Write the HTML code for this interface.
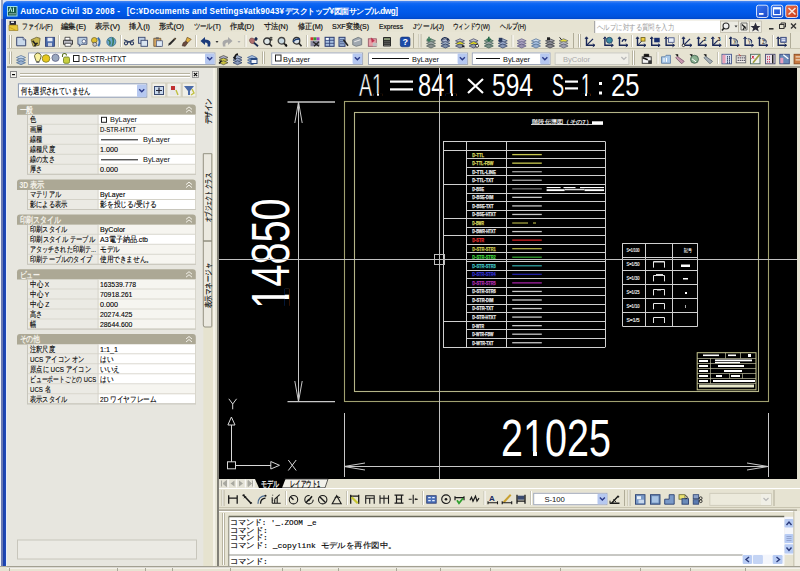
<!DOCTYPE html>
<html><head><meta charset="utf-8">
<style>
*{margin:0;padding:0;box-sizing:border-box}
html,body{width:800px;height:571px;overflow:hidden;background:#e6e3d2;font-family:"Liberation Sans",sans-serif;position:relative}
.a{position:absolute}
#title{left:2.6px;top:0.8px;width:797.4px;border-top-left-radius:5px;height:18.7px;background:linear-gradient(#4a88f0 0px,#1068f4 2.5px,#0460f0 5px,#0058e8 12px,#0052dc 16px,#0046c8 18px,#003cb0 19.5px)}
#lborder{left:0;top:19px;width:7px;height:552px;background:linear-gradient(90deg,#f0f4f8 0px,#f0f4f8 0.8px,#6a7ab4 1px,#6a7ab4 2.6px,#1a3ea8 3px,#1e48b8 5.5px,#3a68d0 6px,#e4ecfa 6.2px,#e4ecfa 7px)}
#menu{left:7px;top:19.5px;width:793px;height:12.2px;background:#e6e3d2}
#tb1{left:7px;top:31.7px;width:793px;height:16.8px;background:#e8e5d5}
#tb2{left:7px;top:48.3px;width:793px;height:17.5px;background:#e6e3d2;border-top:1px solid #c8c4b0}
#sep{left:7px;top:65.6px;width:793px;height:2.2px;background:#9c9a8c}
#panel{left:7px;top:67.8px;width:212px;height:499px;background:#e7e6df}
#draw{left:219px;top:68px;width:578px;height:411px;background:#000}
#rstrip{left:797px;top:68px;width:3px;height:420px;background:#e6e3d2}
#tabs{left:219px;top:479px;width:581px;height:9px;background:#e6e3d2}
#tb3{left:219px;top:488px;width:581px;height:20px;background:#e6e3d2}
#cmd{left:219px;top:508px;width:581px;height:58px;background:#e6e3d2}
#status{left:0;top:566px;width:800px;height:5px;background:#e6e3d2;border-top:1px solid #aca899}

</style></head><body>
<div class="a" style="left:0;top:0;width:800px;height:20px;background:linear-gradient(90deg,#f4f6f8 0,#f4f6f8 1px,#9aa4c0 1.3px,#9aa4c0 3px,#d8e0f0 3px)"></div>
<div id="title" class="a"></div>
<div id="lborder" class="a"></div>
<div id="menu" class="a"></div>
<div id="tb1" class="a"></div>
<div id="tb2" class="a"></div>
<div id="sep" class="a"></div>
<div id="panel" class="a"></div>
<div id="draw" class="a"></div>
<div id="rstrip" class="a"></div>
<div id="tabs" class="a"></div>
<div id="tb3" class="a"></div>
<div id="cmd" class="a"></div>
<div id="status" class="a"></div>

<svg class="a" style="left:0;top:0" width="800" height="571" viewBox="0 0 800 571" font-family="Liberation Sans, sans-serif">
<defs><clipPath id="dc"><rect x="219" y="68" width="578" height="411"/></clipPath></defs>
<text x="20.2" y="14.2" font-size="8.2" fill="#fff" textLength="99.8" lengthAdjust="spacing" font-weight="bold">AutoCAD Civil 3D 2008 -</text>
<text x="126.7" y="14.2" font-size="8.2" fill="#fff" textLength="157.3" lengthAdjust="spacing" font-weight="bold">[C:¥Documents and Settings¥atk9043¥</text>
<text x="284.5" y="14.2" font-size="8.2" fill="#fff" textLength="113.5" lengthAdjust="spacing" font-weight="bold">デスクトップ¥図面サンプル.dwg]</text>
<rect x="7.5" y="6.5" width="9.5" height="9.5" fill="#1a5a48" stroke="#a0e0e8" stroke-width="1"/>
<path d="M8.8 12 L10.5 7.5 L12 12 M13.5 7.5 V12" fill="none" stroke="#b8f0e0" stroke-width="1" />
<rect x="9" y="13" width="7" height="1.5" fill="#6a9a90" />
<defs><linearGradient id="wg756" x1="0" y1="0" x2="1" y2="1"><stop offset="0" stop-color="#3a78f0"/><stop offset="1" stop-color="#1a48c8"/></linearGradient></defs>
<rect x="756.5" y="5.2" width="11.5" height="12.3" rx="2" fill="url(#wg756)" stroke="#e8eefc" stroke-width="0.9"/>
<rect x="759" y="13" width="4.5" height="1.8" fill="#fff" />
<defs><linearGradient id="wg770" x1="0" y1="0" x2="1" y2="1"><stop offset="0" stop-color="#3a78f0"/><stop offset="1" stop-color="#1a48c8"/></linearGradient></defs>
<rect x="771.3" y="5.2" width="11.5" height="12.3" rx="2" fill="url(#wg770)" stroke="#e8eefc" stroke-width="0.9"/>
<rect x="773.5" y="7.8" width="7" height="6.8" fill="none" stroke="#fff" stroke-width="1.2"/>
<rect x="773.5" y="7.8" width="7" height="1.6" fill="#fff" />
<defs><linearGradient id="wg785" x1="0" y1="0" x2="1" y2="1"><stop offset="0" stop-color="#e8704a"/><stop offset="1" stop-color="#c83a1a"/></linearGradient></defs>
<rect x="785.7" y="5.2" width="12" height="12.3" rx="2" fill="url(#wg785)" stroke="#e8eefc" stroke-width="0.9"/>
<path d="M788.5 8 L795.5 14.5 M795.5 8 L788.5 14.5" fill="none" stroke="#f8e8e0" stroke-width="1.5" />
<path d="M9.5 21 H16 V25 H9.5 Z" fill="#2a2a3a" />
<rect x="11" y="21.5" width="3" height="1.5" fill="#e8e8f0" />
<path d="M9 25 L17.5 25 L18 30.5 L9 30.5 Z" fill="#e8c838" stroke="#8a7020" stroke-width="0.6" />
<path d="M9 27 L16 30.5" fill="none" stroke="#c8a020" stroke-width="1" />
<text x="22" y="28.8" font-size="8" fill="#111" textLength="30.6" lengthAdjust="spacingAndGlyphs" stroke="#111" stroke-width="0.2">ファイル(F)</text>
<text x="61" y="28.8" font-size="8" fill="#111" textLength="25" lengthAdjust="spacingAndGlyphs" stroke="#111" stroke-width="0.2">編集(E)</text>
<text x="95" y="28.8" font-size="8" fill="#111" textLength="25" lengthAdjust="spacingAndGlyphs" stroke="#111" stroke-width="0.2">表示(V)</text>
<text x="129" y="28.8" font-size="8" fill="#111" textLength="21" lengthAdjust="spacingAndGlyphs" stroke="#111" stroke-width="0.2">挿入(I)</text>
<text x="159" y="28.8" font-size="8" fill="#111" textLength="25" lengthAdjust="spacingAndGlyphs" stroke="#111" stroke-width="0.2">形式(O)</text>
<text x="193.5" y="28.8" font-size="8" fill="#111" textLength="27.5" lengthAdjust="spacingAndGlyphs" stroke="#111" stroke-width="0.2">ツール(T)</text>
<text x="230" y="28.8" font-size="8" fill="#111" textLength="24" lengthAdjust="spacingAndGlyphs" stroke="#111" stroke-width="0.2">作成(D)</text>
<text x="264" y="28.8" font-size="8" fill="#111" textLength="24" lengthAdjust="spacingAndGlyphs" stroke="#111" stroke-width="0.2">寸法(N)</text>
<text x="298" y="28.8" font-size="8" fill="#111" textLength="25" lengthAdjust="spacingAndGlyphs" stroke="#111" stroke-width="0.2">修正(M)</text>
<text x="332" y="28.8" font-size="8" fill="#111" textLength="37" lengthAdjust="spacingAndGlyphs" stroke="#111" stroke-width="0.2">SXF変換(S)</text>
<text x="379" y="28.8" font-size="8" fill="#111" textLength="24" lengthAdjust="spacingAndGlyphs" stroke="#111" stroke-width="0.2">Express</text>
<text x="413" y="28.8" font-size="8" fill="#111" textLength="31" lengthAdjust="spacingAndGlyphs" stroke="#111" stroke-width="0.2">Jツール(J)</text>
<text x="452.5" y="28.8" font-size="8" fill="#111" textLength="37.5" lengthAdjust="spacingAndGlyphs" stroke="#111" stroke-width="0.2">ウィンドウ(W)</text>
<text x="500" y="28.8" font-size="8" fill="#111" textLength="26" lengthAdjust="spacingAndGlyphs" stroke="#111" stroke-width="0.2">ヘルプ(H)</text>
<rect x="594.7" y="20.5" width="125.3" height="12.5" fill="#fff" />
<line x1="594.7" y1="21" x2="594.7" y2="33" stroke="#9a9a9a" stroke-width="1"/>
<text x="597" y="30" font-size="8" fill="#9a9a9a" textLength="77" lengthAdjust="spacingAndGlyphs" >ヘルプに対する質問を入力</text>
<rect x="720" y="20.5" width="42" height="12.5" fill="#ecebe2" />
<rect x="720.5" y="21" width="18" height="11.5" fill="none" stroke="#c0bcac" stroke-width="0.8"/>
<rect x="738.5" y="21" width="11" height="11.5" fill="none" stroke="#c0bcac" stroke-width="0.8"/>
<rect x="749.5" y="21" width="12" height="11.5" fill="none" stroke="#c0bcac" stroke-width="0.8"/>
<path d="M726 26 m-3 0 a3 3 0 1 0 6 0 a3 3 0 1 0 -6 0" fill="#f0f0f0" stroke="#333" stroke-width="1.1" />
<path d="M724 28 L722 30.5" fill="none" stroke="#222" stroke-width="1.6" />
<path d="M734.5 25.5 L737.5 25.5 L736 27.5 Z" fill="#333" />
<path d="M741 23 L747 23 L747 30 L741 30 Z" fill="none" stroke="#555" stroke-width="0.8" />
<path d="M742 24.5 L746 28.5 M743 30 L745 26" fill="none" stroke="#222" stroke-width="1.2" />
<path d="M755.5 22.5 L757 26 L760.5 26 L757.8 28.3 L758.8 31.5 L755.5 29.6 L752.2 31.5 L753.2 28.3 L750.5 26 L754 26 Z" fill="#2a2a3a" />
<rect x="769" y="28" width="4.5" height="1.6" fill="#333" />
<rect x="779.5" y="24.5" width="4.5" height="4" fill="none" stroke="#333" stroke-width="1"/>
<path d="M781 24.5 V23 H785.5 V27 H784" fill="none" stroke="#333" stroke-width="1" />
<path d="M791 23.5 L796 28.5 M796 23.5 L791 28.5" fill="none" stroke="#333" stroke-width="1.4" />
<line x1="9.5" y1="35" x2="9.5" y2="48" stroke="#b8b4a0" stroke-width="1"/>
<line x1="10.5" y1="35" x2="10.5" y2="48" stroke="#fff" stroke-width="1"/>
<line x1="11.5" y1="35" x2="11.5" y2="48" stroke="#b8b4a0" stroke-width="1"/>
<g transform="translate(16.2,36.8)"><path d="M0.5 0.5 H7 L9.5 3 V9 H0.5 Z" fill="#c8d8ea" stroke="#3a4870" stroke-width="1"/><path d="M7 0.5 V3 H9.5" fill="#fff" stroke="#3a4870" stroke-width="0.8"/></g>
<g transform="translate(30.6,36.8)"><path d="M0.5 3 L6 0.5 L9.5 1.5 L8.5 8.5 L2.5 9.5 Z" fill="#c8b850" stroke="#6a6030" stroke-width="0.8"/><path d="M2 4 L5 7.5 L7 6 M5 7.5 L4 9.5" stroke="#222" stroke-width="1.6" fill="none"/></g>
<g transform="translate(45,36.8)"><rect x="0.5" y="0.5" width="9" height="9" fill="#4a6aaa" stroke="#2a3a70" stroke-width="0.8"/><rect x="2.5" y="1" width="5" height="3.5" fill="#e8eef8"/><rect x="3" y="6" width="4" height="3.5" fill="#c8d0e0"/></g>
<g transform="translate(63,36.8)"><path d="M2 0.5 H7 V3.5 H2 Z" fill="#fff" stroke="#333" stroke-width="0.8"/><path d="M0.5 3.5 H9.5 V7.5 H0.5 Z" fill="#b8b8c0" stroke="#333" stroke-width="0.9"/><path d="M2 6.5 H8 V9.5 H2 Z" fill="#fff" stroke="#444" stroke-width="0.8"/></g>
<g transform="translate(77.4,36.8)"><path d="M0.5 0.5 H9.5 V7.5 H4 L2 9.5 L2 7.5 H0.5 Z" fill="#b8cce0" stroke="#3a4870" stroke-width="0.9"/><circle cx="6.5" cy="4.5" r="1.8" fill="#fff" stroke="#3a4870" stroke-width="0.7"/></g>
<g transform="translate(91.3,36.8)"><circle cx="3" cy="3.5" r="2.8" fill="#e0c030" stroke="#6a5a20" stroke-width="0.7"/><circle cx="3.5" cy="7.5" r="2" fill="#c8c8d0" stroke="#444" stroke-width="0.7"/><path d="M6.5 1 Q10 4.5 7 9.5" fill="none" stroke="#3a70b0" stroke-width="2"/></g>
<g transform="translate(106.3,36.8)"><circle cx="5" cy="5" r="4.5" fill="#6aa8d0" stroke="#3a6a8a" stroke-width="0.8"/><path d="M2 3 Q5 5 3 8 M6 1 Q8 4 6 9" stroke="#3a7a5a" stroke-width="1.6" fill="none"/></g>
<g transform="translate(124,36.8)"><circle cx="2" cy="6.5" r="1.6" fill="none" stroke="#2a3a60" stroke-width="1.1"/><circle cx="8" cy="6.5" r="1.6" fill="none" stroke="#2a3a60" stroke-width="1.1"/><path d="M0 3 L7 6 M10 3 L3 6" stroke="#2a3a60" stroke-width="1.1"/></g>
<g transform="translate(138,36.8)"><rect x="0.5" y="0.5" width="6.5" height="6" fill="#c0d0e4" stroke="#3a4870" stroke-width="0.9"/><rect x="3" y="3.5" width="6.5" height="6" fill="#d8e4f0" stroke="#3a4870" stroke-width="0.9"/></g>
<g transform="translate(152.8,36.8)"><path d="M1 1.5 H8 V9.5 H1 Z" fill="#d8a860" stroke="#6a5030" stroke-width="0.8"/><rect x="3" y="0.5" width="3" height="2" fill="#666"/><rect x="3.5" y="4" width="6" height="5.5" fill="#e0ecf8" stroke="#3a4870" stroke-width="0.7"/></g>
<g transform="translate(167,36.8)"><path d="M1 9 L2 6.5 L8 0.8 L9.3 2 L3.5 8 Z" fill="#2a2a2a"/><path d="M7 1.5 L8.5 3" stroke="#c8a060" stroke-width="0.8"/></g>
<g transform="translate(181.7,36.8)"><path d="M5.5 0.5 L9.5 2.5 L6 6 L4 4.5 Z" fill="#e0b040" stroke="#6a4a20" stroke-width="0.7"/><path d="M4 4.5 L6 6 L3.5 9.5 L0.5 9 L1.5 6 Z" fill="#6a4a40" stroke="#3a2a20" stroke-width="0.6"/></g>
<g transform="translate(249,36.8)"><path d="M0.5 4 Q0.5 0.5 4 1.5 L6 3 L4.5 7 Q1 7 0.5 4 Z" fill="#b07070" stroke="#704040" stroke-width="0.6"/><path d="M5 6 L9 9.5 M7 0.5 V4 M5.5 2 H8.5" stroke="#1a2a50" stroke-width="1.8"/></g>
<g transform="translate(263,36.8)"><circle cx="4" cy="4.5" r="3.3" fill="#e0e8e8" stroke="#333" stroke-width="1.3"/><path d="M6.5 7 L9 9.7" stroke="#222" stroke-width="1.6"/><path d="M8 0 V4 M6.5 1 H9.5 M6.5 3 H9.5" stroke="#222" stroke-width="0.9"/></g>
<g transform="translate(277.5,36.8)"><circle cx="4" cy="4" r="3.3" fill="#c8d8e0" stroke="#444" stroke-width="1.3"/><path d="M6.5 6.5 L9.5 9.5" stroke="#222" stroke-width="1.8"/><path d="M7 9.5 L9.5 9.5 L9.5 7 Z" fill="#111"/></g>
<g transform="translate(292,36.8)"><circle cx="4.5" cy="4" r="3.3" fill="#d8e0e8" stroke="#333" stroke-width="1.3"/><path d="M7 6.5 L9.5 9.5" stroke="#222" stroke-width="1.6"/><path d="M1 5 Q4 1.5 8 2.5" stroke="#1a3a70" stroke-width="1.4" fill="none"/></g>
<g transform="translate(310,36.8)"><rect x="0.5" y="0.5" width="3" height="3" fill="#d03030"/><rect x="3.5" y="0.5" width="3" height="3" fill="#30a030"/><rect x="6.5" y="0.5" width="3" height="3" fill="#a040c0"/><path d="M0.5 4 H9.5 V9.5 H0.5 Z" fill="#8a8aa0"/><path d="M3 5 L9 9.5 M9 5 L4 9.5" stroke="#222" stroke-width="1.2"/></g>
<g transform="translate(324.6,36.8)"><rect x="0.5" y="0.5" width="9" height="9" fill="#a8c0e0" stroke="#2a3a70" stroke-width="1"/><path d="M5 0.5 V9.5 M0.5 3.5 H9.5 M0.5 6.5 H9.5" stroke="#2a3a70" stroke-width="0.8"/><rect x="1.5" y="1.2" width="2.5" height="1.8" fill="#fff"/></g>
<g transform="translate(338.5,36.8)"><rect x="0.5" y="0.5" width="6" height="9" fill="#a8c0e0" stroke="#2a3a70" stroke-width="1"/><path d="M1.5 3 H5.5 M1.5 5 H5.5 M1.5 7 H5.5" stroke="#2a3a70" stroke-width="0.8"/><path d="M5 3 L9.5 9" stroke="#222" stroke-width="1.6"/></g>
<g transform="translate(352.2,36.8)"><path d="M0.5 3 L6 0.5 L9.5 2 L9.5 8 L4 9.5 L0.5 8 Z" fill="#a0a8b0" stroke="#606870" stroke-width="0.7"/><path d="M2 5 L8 3" stroke="#e8e8e8" stroke-width="1"/></g>
<g transform="translate(367.8,36.8)"><rect x="0.5" y="2" width="8" height="7.5" fill="#e8a0a8" stroke="#905060" stroke-width="0.8"/><path d="M3 0.5 L7 4 L4 6 Z" fill="#c03050"/><rect x="5" y="6" width="4.5" height="3.5" fill="#c0c0c0"/></g>
<g transform="translate(382,36.8)"><rect x="1" y="0.3" width="8" height="9.5" rx="0.8" fill="#2a2a28"/><rect x="2" y="1.3" width="6" height="2" fill="#8a9878"/><path d="M2.5 5 H7.5 M2.5 7 H7.5 M2.5 8.8 H7.5" stroke="#c8c8c8" stroke-width="0.8" stroke-dasharray="1 1"/></g>
<g transform="translate(400,36.8)"><rect x="0.3" y="0.3" width="9.7" height="9.7" rx="1.8" fill="#1c4aa8" stroke="#0c2a70" stroke-width="0.6"/><text x="2.4" y="8.6" font-size="9" font-weight="bold" fill="#fff" font-family="Liberation Sans">?</text></g>
<g transform="translate(426,36.8)"><path d="M0.5 4.0 L5 2.0 L9.5 4.0 L5 6.0 Z" fill="#90a898" stroke="#4a5a58" stroke-width="0.7"/><path d="M0.5 6.6 L5 4.6 L9.5 6.6 L5 8.6 Z" fill="#a0a8a8" stroke="#4a5a58" stroke-width="0.7"/><path d="M0.5 9.2 L5 7.2 L9.5 9.2 L5 11.2 Z" fill="#8a9090" stroke="#4a5a58" stroke-width="0.7"/><path d="M3 0 V3.5 M1 2 L3 4 L5 2" stroke="#3a7a5a" stroke-width="1.6" fill="none"/></g>
<g transform="translate(440.4,36.8)"><path d="M0.5 4.0 L5 2.0 L9.5 4.0 L5 6.0 Z" fill="#b8c0d8" stroke="#2a3a60" stroke-width="0.7"/><path d="M0.5 6.6 L5 4.6 L9.5 6.6 L5 8.6 Z" fill="#98a8c0" stroke="#2a3a60" stroke-width="0.7"/><path d="M0.5 9.2 L5 7.2 L9.5 9.2 L5 11.2 Z" fill="#8090a8" stroke="#2a3a60" stroke-width="0.7"/><path d="M1 3 Q4 -1 8 2.5 L6.5 3.5" stroke="#1a2a50" stroke-width="1.4" fill="none"/></g>
<g transform="translate(455,36.8)"><path d="M0.5 4.0 L5 2.0 L9.5 4.0 L5 6.0 Z" fill="#c0c0d0" stroke="#3a4060" stroke-width="0.7"/><path d="M0.5 6.6 L5 4.6 L9.5 6.6 L5 8.6 Z" fill="#e0d820" stroke="#3a4060" stroke-width="0.7"/><path d="M0.5 9.2 L5 7.2 L9.5 9.2 L5 11.2 Z" fill="#9098a8" stroke="#3a4060" stroke-width="0.7"/><path d="M7.5 8 L10 10.5 L7 10.5 Z" fill="#111"/></g>
<g transform="translate(468.6,36.8)"><path d="M0.5 4.0 L5 2.0 L9.5 4.0 L5 6.0 Z" fill="#c0c0d0" stroke="#3a4060" stroke-width="0.7"/><path d="M0.5 6.6 L5 4.6 L9.5 6.6 L5 8.6 Z" fill="#e0d820" stroke="#3a4060" stroke-width="0.7"/><path d="M0.5 9.2 L5 7.2 L9.5 9.2 L5 11.2 Z" fill="#9098a8" stroke="#3a4060" stroke-width="0.7"/><circle cx="8.5" cy="9" r="1.5" fill="#fff" stroke="#111" stroke-width="0.8"/></g>
<g transform="translate(483.8,36.8)"><path d="M0.5 4.0 L5 2.0 L9.5 4.0 L5 6.0 Z" fill="#90a898" stroke="#3a5a50" stroke-width="0.7"/><path d="M0.5 6.6 L5 4.6 L9.5 6.6 L5 8.6 Z" fill="#a0a8a8" stroke="#3a5a50" stroke-width="0.7"/><path d="M0.5 9.2 L5 7.2 L9.5 9.2 L5 11.2 Z" fill="#7a9088" stroke="#3a5a50" stroke-width="0.7"/><path d="M5 0 V3.5 M3 2 L5 4 L7 2" stroke="#2a6a4a" stroke-width="1.6" fill="none"/></g>
<g transform="translate(497.8,36.8)"><path d="M0.5 4.0 L5 2.0 L9.5 4.0 L5 6.0 Z" fill="#a8b8d0" stroke="#2a3a60" stroke-width="0.7"/><path d="M0.5 6.6 L5 4.6 L9.5 6.6 L5 8.6 Z" fill="#98a8c8" stroke="#2a3a60" stroke-width="0.7"/><path d="M0.5 9.2 L5 7.2 L9.5 9.2 L5 11.2 Z" fill="#8898b8" stroke="#2a3a60" stroke-width="0.7"/><rect x="1" y="1" width="3.5" height="4" fill="#2a3a60"/></g>
<g transform="translate(516.7,36.8)"><path d="M0.5 4.0 L5 2.0 L9.5 4.0 L5 6.0 Z" fill="#b8b0c8" stroke="#5a5880" stroke-width="0.7"/><path d="M0.5 6.6 L5 4.6 L9.5 6.6 L5 8.6 Z" fill="#a8a0c0" stroke="#5a5880" stroke-width="0.7"/><path d="M0.5 9.2 L5 7.2 L9.5 9.2 L5 11.2 Z" fill="#9890b0" stroke="#5a5880" stroke-width="0.7"/></g>
<g transform="translate(531,36.8)"><path d="M0.5 4.0 L5 2.0 L9.5 4.0 L5 6.0 Z" fill="#c8d8ec" stroke="#4a6a90" stroke-width="0.7"/><path d="M0.5 6.6 L5 4.6 L9.5 6.6 L5 8.6 Z" fill="#a8c0e0" stroke="#4a6a90" stroke-width="0.7"/><path d="M0.5 9.2 L5 7.2 L9.5 9.2 L5 11.2 Z" fill="#98b0d0" stroke="#4a6a90" stroke-width="0.7"/></g>
<g transform="translate(545,36.8)"><path d="M0.5 4.0 L5 2.0 L9.5 4.0 L5 6.0 Z" fill="#a8a8b0" stroke="#333840" stroke-width="0.7"/><path d="M0.5 6.6 L5 4.6 L9.5 6.6 L5 8.6 Z" fill="#909098" stroke="#333840" stroke-width="0.7"/><path d="M0.5 9.2 L5 7.2 L9.5 9.2 L5 11.2 Z" fill="#888890" stroke="#333840" stroke-width="0.7"/><rect x="2" y="0.5" width="3" height="3" fill="#222"/></g>
<g transform="translate(558.6,36.8)"><path d="M0.5 4.0 L5 2.0 L9.5 4.0 L5 6.0 Z" fill="#e8e040" stroke="#5a6070" stroke-width="0.7"/><path d="M0.5 6.6 L5 4.6 L9.5 6.6 L5 8.6 Z" fill="#b8b8c0" stroke="#5a6070" stroke-width="0.7"/><path d="M0.5 9.2 L5 7.2 L9.5 9.2 L5 11.2 Z" fill="#a0a0b0" stroke="#5a6070" stroke-width="0.7"/><path d="M1 0.5 L3 3" stroke="#222" stroke-width="1"/></g>
<g transform="translate(585,36.8)"><path d="M1.5 0.5 V8.5 H9.5" stroke="#1a2858" stroke-width="1.4" fill="none"/><path d="M0 2.2 L1.5 0 L3 2.2 M7.8 7 L10 8.5 L7.8 10" stroke="#1a2858" stroke-width="1" fill="none"/><path d="M2 8 L8 2" stroke="#1a2858" stroke-width="1.2"/></g>
<g transform="translate(603.4,36.8)"><path d="M1.5 0.5 V8.5 H9.5" stroke="#1a2858" stroke-width="1.4" fill="none"/><path d="M0 2.2 L1.5 0 L3 2.2 M7.8 7 L10 8.5 L7.8 10" stroke="#1a2858" stroke-width="1" fill="none"/><circle cx="6" cy="3.5" r="3" fill="#3a8aa0" stroke="#1a3a60" stroke-width="0.8"/></g>
<g transform="translate(618,36.8)"><path d="M1.5 0.5 V8.5 H9.5" stroke="#1a2858" stroke-width="1.4" fill="none"/><path d="M0 2.2 L1.5 0 L3 2.2 M7.8 7 L10 8.5 L7.8 10" stroke="#1a2858" stroke-width="1" fill="none"/><path d="M4 5 Q5 1.5 8 3 L7 4.5" stroke="#1a2858" stroke-width="1.3" fill="none"/></g>
<g transform="translate(636,36.8)"><path d="M1.5 0.5 V8.5 H9.5" stroke="#1a2858" stroke-width="1.4" fill="none"/><path d="M0 2.2 L1.5 0 L3 2.2 M7.8 7 L10 8.5 L7.8 10" stroke="#1a2858" stroke-width="1" fill="none"/><path d="M2 8 L6 4" stroke="#1a2858" stroke-width="1"/><rect x="5" y="0.8" width="4" height="3.5" fill="#f0d040" stroke="#6a5a10" stroke-width="0.8"/></g>
<g transform="translate(650.2,36.8)"><path d="M1.5 0.5 V8.5 H9.5" stroke="#1a2858" stroke-width="1.4" fill="none"/><path d="M0 2.2 L1.5 0 L3 2.2 M7.8 7 L10 8.5 L7.8 10" stroke="#1a2858" stroke-width="1" fill="none"/><rect x="4" y="1" width="5.5" height="4.5" fill="#1a3070"/></g>
<g transform="translate(664.6,36.8)"><path d="M1.5 0.5 V8.5 H9.5" stroke="#1a2858" stroke-width="1.4" fill="none"/><path d="M0 2.2 L1.5 0 L3 2.2 M7.8 7 L10 8.5 L7.8 10" stroke="#1a2858" stroke-width="1" fill="none"/><rect x="4" y="1" width="5.5" height="4.5" fill="#e8eef8" stroke="#3a4a80" stroke-width="0.8"/></g>
<g transform="translate(682,36.8)"><path d="M1.5 0.5 V8.5 H9.5" stroke="#1a2858" stroke-width="1.4" fill="none"/><path d="M0 2.2 L1.5 0 L3 2.2 M7.8 7 L10 8.5 L7.8 10" stroke="#1a2858" stroke-width="1" fill="none"/><path d="M2 8 L8 2" stroke="#1a2858" stroke-width="1.2"/><circle cx="1.5" cy="8.5" r="1.3" fill="#fff" stroke="#111" stroke-width="0.8"/></g>
<g transform="translate(697,36.8)"><path d="M1.5 0.5 V8.5 H9.5" stroke="#1a2858" stroke-width="1.4" fill="none"/><path d="M0 2.2 L1.5 0 L3 2.2 M7.8 7 L10 8.5 L7.8 10" stroke="#1a2858" stroke-width="1" fill="none"/><path d="M2 8 L6.5 3.5" stroke="#1a2858" stroke-width="1.2"/><text x="6.5" y="4" font-size="5" font-weight="bold" fill="#111" font-family="Liberation Sans">2</text></g>
<g transform="translate(711.3,36.8)"><path d="M1.5 0.5 V8.5 H9.5" stroke="#1a2858" stroke-width="1.4" fill="none"/><path d="M0 2.2 L1.5 0 L3 2.2 M7.8 7 L10 8.5 L7.8 10" stroke="#1a2858" stroke-width="1" fill="none"/><path d="M2 8 L6.5 3.5" stroke="#1a2858" stroke-width="1.2"/><text x="6.5" y="4" font-size="5" font-weight="bold" fill="#111" font-family="Liberation Sans">3</text></g>
<g transform="translate(729.2,36.8)"><path d="M1.5 0.5 V8.5 H9.5" stroke="#1a2858" stroke-width="1.4" fill="none"/><path d="M0 2.2 L1.5 0 L3 2.2 M7.8 7 L10 8.5 L7.8 10" stroke="#1a2858" stroke-width="1" fill="none"/><path d="M4 2 Q9 2 8 6" stroke="#1a2858" stroke-width="1" fill="none"/><text x="4.3" y="7" font-size="4.5" fill="#111" font-family="Liberation Sans">X</text></g>
<g transform="translate(743.6,36.8)"><path d="M1.5 0.5 V8.5 H9.5" stroke="#1a2858" stroke-width="1.4" fill="none"/><path d="M0 2.2 L1.5 0 L3 2.2 M7.8 7 L10 8.5 L7.8 10" stroke="#1a2858" stroke-width="1" fill="none"/><path d="M4 2 Q9 2 8 6" stroke="#1a2858" stroke-width="1" fill="none"/><text x="4.3" y="7" font-size="4.5" fill="#111" font-family="Liberation Sans">Y</text></g>
<g transform="translate(758,36.8)"><path d="M1.5 0.5 V8.5 H9.5" stroke="#1a2858" stroke-width="1.4" fill="none"/><path d="M0 2.2 L1.5 0 L3 2.2 M7.8 7 L10 8.5 L7.8 10" stroke="#1a2858" stroke-width="1" fill="none"/><path d="M4 2 Q9 2 8 6" stroke="#1a2858" stroke-width="1" fill="none"/><text x="4.3" y="7" font-size="4.5" fill="#111" font-family="Liberation Sans">Z</text></g>
<g transform="translate(776.7,36.8)"><path d="M1.5 0.5 V8.5 H9.5" stroke="#1a2858" stroke-width="1.4" fill="none"/><path d="M0 2.2 L1.5 0 L3 2.2 M7.8 7 L10 8.5 L7.8 10" stroke="#1a2858" stroke-width="1" fill="none"/><rect x="4" y="0.5" width="5.5" height="5" fill="#8a9ac8" stroke="#2a3a70" stroke-width="0.8"/><path d="M5 2 H8.5 M5 3.8 H8.5" stroke="#fff" stroke-width="0.8"/></g>
<path d="M210 46.5 Q212.5 39.5 205 39.5 L205 37 L200.5 41 L205 45 L205 42.5 Q208.5 42.5 207.5 46.5 Z" fill="#1a3a7a" />
<path d="M215.5 41 L218.5 41 L217 43 Z" fill="#333" />
<path d="M223 46.5 Q220.5 39.5 228 39.5 L228 37 L232.5 41 L228 45 L228 42.5 Q224.5 42.5 225.5 46.5 Z" fill="#a8a8a8" />
<path d="M237.5 41 L240.5 41 L239 43 Z" fill="#aaa" />
<line x1="58.5" y1="35" x2="58.5" y2="47" stroke="#c5c2b2" stroke-width="1"/>
<line x1="59.5" y1="35" x2="59.5" y2="47" stroke="#fff" stroke-width="1"/>
<line x1="120.5" y1="35" x2="120.5" y2="47" stroke="#c5c2b2" stroke-width="1"/>
<line x1="121.5" y1="35" x2="121.5" y2="47" stroke="#fff" stroke-width="1"/>
<line x1="195.5" y1="35" x2="195.5" y2="47" stroke="#c5c2b2" stroke-width="1"/>
<line x1="196.5" y1="35" x2="196.5" y2="47" stroke="#fff" stroke-width="1"/>
<line x1="245.0" y1="35" x2="245.0" y2="47" stroke="#c5c2b2" stroke-width="1"/>
<line x1="246.0" y1="35" x2="246.0" y2="47" stroke="#fff" stroke-width="1"/>
<line x1="306.5" y1="35" x2="306.5" y2="47" stroke="#c5c2b2" stroke-width="1"/>
<line x1="307.5" y1="35" x2="307.5" y2="47" stroke="#fff" stroke-width="1"/>
<line x1="512.0" y1="35" x2="512.0" y2="47" stroke="#c5c2b2" stroke-width="1"/>
<line x1="513.0" y1="35" x2="513.0" y2="47" stroke="#fff" stroke-width="1"/>
<line x1="631.5" y1="35" x2="631.5" y2="47" stroke="#c5c2b2" stroke-width="1"/>
<line x1="632.5" y1="35" x2="632.5" y2="47" stroke="#fff" stroke-width="1"/>
<line x1="678.5" y1="35" x2="678.5" y2="47" stroke="#c5c2b2" stroke-width="1"/>
<line x1="679.5" y1="35" x2="679.5" y2="47" stroke="#fff" stroke-width="1"/>
<line x1="725.5" y1="35" x2="725.5" y2="47" stroke="#c5c2b2" stroke-width="1"/>
<line x1="726.5" y1="35" x2="726.5" y2="47" stroke="#fff" stroke-width="1"/>
<line x1="772.5" y1="35" x2="772.5" y2="47" stroke="#c5c2b2" stroke-width="1"/>
<line x1="773.5" y1="35" x2="773.5" y2="47" stroke="#fff" stroke-width="1"/>
<line x1="413.5" y1="33" x2="413.5" y2="48" stroke="#b0ac98" stroke-width="1"/>
<line x1="573.5" y1="33" x2="573.5" y2="48" stroke="#b0ac98" stroke-width="1"/>
<line x1="790.5" y1="33" x2="790.5" y2="48" stroke="#b0ac98" stroke-width="1"/>
<line x1="419.0" y1="34" x2="419.0" y2="47.5" stroke="#b8b4a0" stroke-width="1"/>
<line x1="420.0" y1="34" x2="420.0" y2="47.5" stroke="#fff" stroke-width="1"/>
<line x1="421.0" y1="34" x2="421.0" y2="47.5" stroke="#b8b4a0" stroke-width="1"/>
<line x1="578.5" y1="34" x2="578.5" y2="47.5" stroke="#b8b4a0" stroke-width="1"/>
<line x1="579.5" y1="34" x2="579.5" y2="47.5" stroke="#fff" stroke-width="1"/>
<line x1="580.5" y1="34" x2="580.5" y2="47.5" stroke="#b8b4a0" stroke-width="1"/>
<line x1="9.5" y1="51.5" x2="9.5" y2="64" stroke="#b8b4a0" stroke-width="1"/>
<line x1="10.5" y1="51.5" x2="10.5" y2="64" stroke="#fff" stroke-width="1"/>
<line x1="11.5" y1="51.5" x2="11.5" y2="64" stroke="#b8b4a0" stroke-width="1"/>
<g transform="translate(16,53.5)"><path d="M0.5 4.0 L5 2.0 L9.5 4.0 L5 6.0 Z" fill="#c8d8ec" stroke="#4a6a90" stroke-width="0.7"/><path d="M0.5 6.6 L5 4.6 L9.5 6.6 L5 8.6 Z" fill="#a8c0e0" stroke="#4a6a90" stroke-width="0.7"/><path d="M0.5 9.2 L5 7.2 L9.5 9.2 L5 11.2 Z" fill="#98b0d0" stroke="#4a6a90" stroke-width="0.7"/></g>
<rect x="28" y="52.4" width="187.5" height="12.6" fill="#fff" />
<rect x="28.5" y="52.9" width="186.5" height="11.6" fill="none" stroke="#a0a8b8" stroke-width="1"/>
<path d="M36.3 61.5 L35 58 A3.3 3.3 0 1 1 40.7 58 L39.3 61.5 Z" fill="#f8f0a0" stroke="#5a5a30" stroke-width="0.9" />
<rect x="36.3" y="61.5" width="3" height="1.5" fill="#777" />
<circle cx="46" cy="58.5" r="3.8" fill="#e8c820" stroke="#7a7a20" stroke-width="0.8"/>
<circle cx="55.5" cy="57.8" r="3.6" fill="#9aa8c0" stroke="#5a6080" stroke-width="0.8"/>
<path d="M62.5 57 V55.5 A2 2 0 0 1 66.5 55.5" fill="none" stroke="#5a7020" stroke-width="1.1" />
<rect x="63.5" y="57" width="6" height="6.3" rx="1.5" fill="#c8d040" stroke="#6a7a20" stroke-width="0.8"/>
<rect x="73.5" y="55.5" width="5.5" height="6" fill="#fff" stroke="#222" stroke-width="1"/>
<text x="82.3" y="62" font-size="8.4" fill="#111" textLength="44" lengthAdjust="spacingAndGlyphs" >D-STR-HTXT</text>
<rect x="205" y="53.5" width="9.5" height="10.5" fill="#b6c8f0" rx="1"/>
<path d="M207.25 57.25 L209.75 59.75 L212.25 57.25" fill="none" stroke="#2a3a8a" stroke-width="1.4" />
<g transform="translate(218.5,53.5)"><path d="M0.5 4.0 L5 2.0 L9.5 4.0 L5 6.0 Z" fill="#a8a8c0" stroke="#4a4a40" stroke-width="0.7"/><path d="M0.5 6.6 L5 4.6 L9.5 6.6 L5 8.6 Z" fill="#d8d040" stroke="#4a4a40" stroke-width="0.7"/><path d="M0.5 9.2 L5 7.2 L9.5 9.2 L5 11.2 Z" fill="#c8c040" stroke="#4a4a40" stroke-width="0.7"/><path d="M0.5 10 L3 7" stroke="#111" stroke-width="1.2"/></g>
<g transform="translate(232.5,53.5)"><path d="M0.5 4.0 L5 2.0 L9.5 4.0 L5 6.0 Z" fill="#a8b8d0" stroke="#2a3a60" stroke-width="0.7"/><path d="M0.5 6.6 L5 4.6 L9.5 6.6 L5 8.6 Z" fill="#98a8c8" stroke="#2a3a60" stroke-width="0.7"/><path d="M0.5 9.2 L5 7.2 L9.5 9.2 L5 11.2 Z" fill="#8898b8" stroke="#2a3a60" stroke-width="0.7"/><path d="M5.5 0.5 Q2 1 2.5 5 L1 4" stroke="#111" stroke-width="1.5" fill="none"/></g>
<g transform="translate(247,53.5)"><path d="M0.5 4.0 L5 2.0 L9.5 4.0 L5 6.0 Z" fill="#a8c0e0" stroke="#3a5a90" stroke-width="0.7"/><path d="M0.5 6.6 L5 4.6 L9.5 6.6 L5 8.6 Z" fill="#98b0d8" stroke="#3a5a90" stroke-width="0.7"/><path d="M0.5 9.2 L5 7.2 L9.5 9.2 L5 11.2 Z" fill="#88a0c8" stroke="#3a5a90" stroke-width="0.7"/><rect x="4" y="5" width="6" height="5" fill="#f0f4fc" stroke="#2a4a80" stroke-width="1"/><rect x="4" y="5" width="6" height="1.5" fill="#2a4a80"/></g>
<line x1="262.5" y1="51.5" x2="262.5" y2="64" stroke="#b8b4a0" stroke-width="1"/>
<line x1="263.5" y1="51.5" x2="263.5" y2="64" stroke="#fff" stroke-width="1"/>
<line x1="264.5" y1="51.5" x2="264.5" y2="64" stroke="#b8b4a0" stroke-width="1"/>
<rect x="271.2" y="52.4" width="91.90000000000003" height="12.6" fill="#fff" />
<rect x="271.7" y="52.9" width="90.90000000000003" height="11.6" fill="none" stroke="#a0a8b8" stroke-width="1"/>
<rect x="352.6" y="53.5" width="9.5" height="10.5" fill="#b6c8f0" rx="1"/>
<path d="M354.85 57.25 L357.35 59.75 L359.85 57.25" fill="none" stroke="#2a3a8a" stroke-width="1.4" />
<text x="283" y="62" font-size="8" fill="#111" textLength="27" lengthAdjust="spacingAndGlyphs" >ByLayer</text>
<rect x="275.5" y="55" width="5.5" height="6" fill="#fff" stroke="#222" stroke-width="1"/>
<rect x="368" y="52.4" width="100.10000000000002" height="12.6" fill="#fff" />
<rect x="368.5" y="52.9" width="99.10000000000002" height="11.6" fill="none" stroke="#a0a8b8" stroke-width="1"/>
<rect x="457.6" y="53.5" width="9.5" height="10.5" fill="#b6c8f0" rx="1"/>
<path d="M459.85 57.25 L462.35 59.75 L464.85 57.25" fill="none" stroke="#2a3a8a" stroke-width="1.4" />
<text x="412" y="62" font-size="8" fill="#111" textLength="27" lengthAdjust="spacingAndGlyphs" >ByLayer</text>
<line x1="372" y1="58.5" x2="409" y2="58.5" stroke="#111" stroke-width="1"/>
<rect x="471.8" y="52.4" width="78.80000000000001" height="12.6" fill="#fff" />
<rect x="472.3" y="52.9" width="77.80000000000001" height="11.6" fill="none" stroke="#a0a8b8" stroke-width="1"/>
<rect x="540.1" y="53.5" width="9.5" height="10.5" fill="#b6c8f0" rx="1"/>
<path d="M542.35 57.25 L544.85 59.75 L547.35 57.25" fill="none" stroke="#2a3a8a" stroke-width="1.4" />
<text x="503" y="62" font-size="8" fill="#111" textLength="27" lengthAdjust="spacingAndGlyphs" >ByLayer</text>
<line x1="476" y1="58.5" x2="500" y2="58.5" stroke="#111" stroke-width="1"/>
<rect x="554.6" y="52.4" width="74.79999999999995" height="12.6" fill="#f0efe8" />
<rect x="555.1" y="52.9" width="73.79999999999995" height="11.6" fill="none" stroke="#c8c8c0" stroke-width="1"/>
<path d="M621.4 57 L623.9 59.5 L626.4 57" fill="none" stroke="#b8b8b8" stroke-width="1.2" />
<text x="563" y="62" font-size="8" fill="#aaa" textLength="27" lengthAdjust="spacingAndGlyphs" >ByColor</text>
<line x1="632.5" y1="50.5" x2="632.5" y2="65" stroke="#b8b4a0" stroke-width="1"/>
<line x1="633.5" y1="50.5" x2="633.5" y2="65" stroke="#fff" stroke-width="1"/>
<line x1="634.5" y1="50.5" x2="634.5" y2="65" stroke="#b8b4a0" stroke-width="1"/>
<g transform="translate(641.7,53.8)"><rect x="0.5" y="3" width="9" height="6.5" fill="#f4f4f4" stroke="#333" stroke-width="0.9"/><path d="M2.5 3 V0.5 H7 V3" fill="#111" stroke="#111" stroke-width="0.9"/><path d="M1 4 L6 6" stroke="#111" stroke-width="1.5"/><rect x="6.5" y="6.5" width="3.5" height="3.5" fill="#333"/></g>
<g transform="translate(661,53.8)"><path d="M0.5 3 H4 L5 1.5 H9.5 V9.5 H0.5 Z" fill="#a8c8e8" stroke="#5a7aa0" stroke-width="0.8"/><path d="M3 4 V8 M5.5 4 V8" stroke="#fff" stroke-width="1"/></g>
<g transform="translate(674.7,53.8)"><path d="M0.5 0.5 L3.5 0.5 L3.5 3.5 Z" fill="#111"/><path d="M2.5 2.5 L9.5 7.5 L7 10 L1 4 Z" fill="#c898b0" stroke="#6a4a60" stroke-width="0.7"/></g>
<g transform="translate(689,53.8)"><path d="M0.5 0.5 L3.5 0.5 L3.5 3.5 Z" fill="#111"/><circle cx="5.5" cy="5.5" r="4" fill="#8ab090" stroke="#3a5a4a" stroke-width="0.8"/><path d="M3 5 L7 8" stroke="#fff" stroke-width="1"/></g>
<g transform="translate(703,53.8)"><path d="M0.5 0.5 L3.5 0.5 L3.5 3.5 Z" fill="#111"/><path d="M2.5 2.5 L9.5 7.5 L7 10 L1 4 Z" fill="#a8b0b8" stroke="#4a5a68" stroke-width="0.7"/></g>
<g transform="translate(721.5,53.8)"><rect x="0.5" y="0.5" width="9.5" height="9.5" fill="#d8e0f0" stroke="#4a5a90" stroke-width="0.9"/><rect x="1" y="1" width="3" height="8.5" fill="#e8a0b8"/><path d="M5.5 3 h1 M7.5 3 h1 M5.5 5 h1 M7.5 5 h1 M5.5 7 h1 M7.5 7 h1 M5.5 9 h1 M7.5 9 h1" stroke="#1a2a50" stroke-width="1.2"/></g>
<g transform="translate(735.7,53.8)"><rect x="0.5" y="2" width="9.5" height="7" fill="#f4f0ec" stroke="#6a6a70" stroke-width="0.9"/><path d="M2 4 h1 M4 4 h1 M6 4 h1 M8 4 h1 M2 6.5 h1 M4 6.5 h1 M6 6.5 h1 M8 6.5 h1" stroke="#1a1a30" stroke-width="1.3"/><path d="M3 0.5 L5 2" stroke="#c03030" stroke-width="1"/></g>
<g transform="translate(750,53.8)"><rect x="0.5" y="0.5" width="9.5" height="9.5" fill="#f0f0f0" stroke="#4a6a60" stroke-width="0.9"/><path d="M2 2 L4 5 M1.5 5 L4 2" stroke="#d03050" stroke-width="1"/><path d="M3 9 L9.5 1" stroke="#a0a040" stroke-width="1.8"/></g>
<g transform="translate(765,53.8)"><rect x="0.5" y="0.5" width="9.5" height="9.5" fill="#e8e0e8" stroke="#4a4a70" stroke-width="0.9"/><path d="M2 3 h1 M4 3 h1 M2 5.5 h1 M4 5.5 h1 M2 8 h1 M4 8 h1" stroke="#c03050" stroke-width="1.3"/><rect x="7" y="1" width="1.5" height="8.5" fill="#222"/></g>
<g transform="translate(779.3,53.8)"><rect x="0.5" y="0.5" width="9.5" height="9.5" fill="#6a8ab8" stroke="#3a4a80" stroke-width="0.9"/><rect x="1" y="4" width="3" height="5.5" fill="#e8a0c0"/><path d="M4 1 L9 5" stroke="#fff" stroke-width="1.3"/></g>
<g transform="translate(793.6,53.8)"><rect x="0.5" y="0.5" width="9.5" height="9.5" fill="#c87a40" stroke="#8a4a20" stroke-width="0.9"/><path d="M2 3 h5 M2 6 h5" stroke="#f0d8c0" stroke-width="1.2"/></g>
<line x1="657.0" y1="52" x2="657.0" y2="64" stroke="#c5c2b2" stroke-width="1"/>
<line x1="658.0" y1="52" x2="658.0" y2="64" stroke="#fff" stroke-width="1"/>
<line x1="717.5" y1="52" x2="717.5" y2="64" stroke="#c5c2b2" stroke-width="1"/>
<line x1="718.5" y1="52" x2="718.5" y2="64" stroke="#fff" stroke-width="1"/>
<rect x="10.5" y="71.5" width="6" height="6" fill="#f4f3ee" stroke="#888" stroke-width="1"/>
<rect x="12" y="74" width="3" height="1.2" fill="#000" />
<line x1="20" y1="73.5" x2="190" y2="73.5" stroke="#b8b4a0" stroke-width="1"/>
<line x1="20" y1="74.5" x2="190" y2="74.5" stroke="#fff" stroke-width="1"/>
<line x1="20" y1="76.5" x2="190" y2="76.5" stroke="#b8b4a0" stroke-width="1"/>
<line x1="20" y1="77.5" x2="190" y2="77.5" stroke="#fff" stroke-width="1"/>
<rect x="192.5" y="71.5" width="6" height="6" fill="#f4f3ee" stroke="#888" stroke-width="0.8"/>
<path d="M193.8 72.8 L197.2 76.2 M197.2 72.8 L193.8 76.2" fill="none" stroke="#000" stroke-width="1.1" />
<rect x="17.9" y="83.3" width="129.4" height="14.4" fill="#fff" />
<rect x="18.4" y="83.8" width="128.4" height="13.4" fill="none" stroke="#8a98b0" stroke-width="1"/>
<text x="20.6" y="93.8" font-size="9" fill="#000" textLength="70" lengthAdjust="spacingAndGlyphs" stroke="#000" stroke-width="0.15">何も選択されていません</text>
<rect x="137" y="84.5" width="9.5" height="12.5" fill="#b6c8f0" rx="1"/>
<path d="M139.25 89.25 L141.75 91.75 L144.25 89.25" fill="none" stroke="#2a3a8a" stroke-width="1.4" />
<rect x="151.9" y="83" width="14.0" height="14" fill="#f0efe8" stroke="#cfcbb8" stroke-width="1"/>
<rect x="166.9" y="83" width="14.299999999999983" height="14" fill="#f0efe8" stroke="#cfcbb8" stroke-width="1"/>
<rect x="182.2" y="83" width="13.800000000000011" height="14" fill="#f0efe8" stroke="#cfcbb8" stroke-width="1"/>
<rect x="154.5" y="86.5" width="9" height="8" fill="#c8d8ec" stroke="#3a4a70" stroke-width="1"/>
<path d="M159 87.5 V93.5 M156 90.5 H162" fill="none" stroke="#223" stroke-width="1.2" />
<rect x="170" y="86" width="7" height="9" fill="#e8e8e8" />
<rect x="171" y="86" width="4" height="4" fill="#c03030" />
<path d="M176 90 L178 95" fill="none" stroke="#c0c040" stroke-width="1.4" />
<path d="M184 86 L194 86 L190 91 L190 95 L188 95 L188 91 Z" fill="#4a6aa8" />
<path d="M192 89 L194 93 L191 95" fill="none" stroke="#c0c040" stroke-width="1.4" />
<path d="M17 114.80000000000001 L17 107.4 Q17 104.4 20 104.4 L192.8 104.4 Q195.8 104.4 195.8 107.4 L195.8 114.80000000000001 Z" fill="#aca895" />
<text x="19.5" y="112.7" font-size="8.5" fill="#f4f2ea" textLength="13.8" lengthAdjust="spacingAndGlyphs" font-weight="bold">一般</text>
<path d="M186 109.4 L189 106.9 L192 109.4 M186 112.4 L189 109.9 L192 112.4" fill="none" stroke="#f4f2ea" stroke-width="1" />
<rect x="27.5" y="114.80000000000001" width="70.6" height="10" fill="#ebeae4" />
<rect x="98.1" y="114.80000000000001" width="97.7" height="10" fill="#ffffff" />
<line x1="27.5" y1="124.30000000000001" x2="195.8" y2="124.30000000000001" stroke="#d4d2c8" stroke-width="1"/>
<text x="30" y="122.20000000000002" font-size="8" fill="#000" textLength="6.2" lengthAdjust="spacingAndGlyphs" stroke="#000" stroke-width="0.12">色</text>
<rect x="101.5" y="117.30000000000001" width="5" height="5" fill="#fff" stroke="#222" stroke-width="1"/>
<text x="110" y="122.20000000000002" font-size="8" fill="#111" textLength="27" lengthAdjust="spacingAndGlyphs" >ByLayer</text>
<rect x="27.5" y="124.80000000000001" width="70.6" height="10" fill="#ebeae4" />
<rect x="98.1" y="124.80000000000001" width="97.7" height="10" fill="#f6f5f0" />
<line x1="27.5" y1="134.3" x2="195.8" y2="134.3" stroke="#d4d2c8" stroke-width="1"/>
<text x="30" y="132.20000000000002" font-size="8" fill="#000" textLength="12.4" lengthAdjust="spacingAndGlyphs" stroke="#000" stroke-width="0.12">画層</text>
<text x="100" y="132.20000000000002" font-size="8" fill="#000" textLength="36.00000000000001" lengthAdjust="spacingAndGlyphs" stroke="#000" stroke-width="0.12">D-STR-HTXT</text>
<rect x="27.5" y="134.8" width="70.6" height="10" fill="#ebeae4" />
<rect x="98.1" y="134.8" width="97.7" height="10" fill="#ffffff" />
<line x1="27.5" y1="144.3" x2="195.8" y2="144.3" stroke="#d4d2c8" stroke-width="1"/>
<text x="30" y="142.20000000000002" font-size="8" fill="#000" textLength="12.4" lengthAdjust="spacingAndGlyphs" stroke="#000" stroke-width="0.12">線種</text>
<line x1="101" y1="139.8" x2="138" y2="139.8" stroke="#111" stroke-width="1"/>
<text x="143" y="142.20000000000002" font-size="8" fill="#111" textLength="27" lengthAdjust="spacingAndGlyphs" >ByLayer</text>
<rect x="27.5" y="144.8" width="70.6" height="10" fill="#ebeae4" />
<rect x="98.1" y="144.8" width="97.7" height="10" fill="#f6f5f0" />
<line x1="27.5" y1="154.3" x2="195.8" y2="154.3" stroke="#d4d2c8" stroke-width="1"/>
<text x="30" y="152.20000000000002" font-size="8" fill="#000" textLength="24.8" lengthAdjust="spacingAndGlyphs" stroke="#000" stroke-width="0.12">線種尺度</text>
<text x="100" y="152.20000000000002" font-size="8" fill="#000" textLength="18.0" lengthAdjust="spacingAndGlyphs" stroke="#000" stroke-width="0.12">1.000</text>
<rect x="27.5" y="154.8" width="70.6" height="10" fill="#ebeae4" />
<rect x="98.1" y="154.8" width="97.7" height="10" fill="#ffffff" />
<line x1="27.5" y1="164.3" x2="195.8" y2="164.3" stroke="#d4d2c8" stroke-width="1"/>
<text x="30" y="162.20000000000002" font-size="8" fill="#000" textLength="24.8" lengthAdjust="spacingAndGlyphs" stroke="#000" stroke-width="0.12">線の太さ</text>
<line x1="101" y1="159.8" x2="138" y2="159.8" stroke="#111" stroke-width="1"/>
<text x="143" y="162.20000000000002" font-size="8" fill="#111" textLength="27" lengthAdjust="spacingAndGlyphs" >ByLayer</text>
<rect x="27.5" y="164.8" width="70.6" height="10" fill="#ebeae4" />
<rect x="98.1" y="164.8" width="97.7" height="10" fill="#f6f5f0" />
<line x1="27.5" y1="174.3" x2="195.8" y2="174.3" stroke="#d4d2c8" stroke-width="1"/>
<text x="30" y="172.20000000000002" font-size="8" fill="#000" textLength="12.4" lengthAdjust="spacingAndGlyphs" stroke="#000" stroke-width="0.12">厚さ</text>
<text x="100" y="172.20000000000002" font-size="8" fill="#000" textLength="18.0" lengthAdjust="spacingAndGlyphs" stroke="#000" stroke-width="0.12">0.000</text>
<line x1="27.5" y1="114.80000000000001" x2="27.5" y2="174.8" stroke="#c8c6bc" stroke-width="1"/>
<line x1="98.1" y1="114.80000000000001" x2="98.1" y2="174.8" stroke="#d4d2c8" stroke-width="1"/>
<line x1="195.5" y1="114.80000000000001" x2="195.5" y2="174.8" stroke="#d8d6cc" stroke-width="1"/>
<line x1="27.5" y1="174.3" x2="195.8" y2="174.3" stroke="#c8c6bc" stroke-width="1"/>
<path d="M17 190.0 L17 182.6 Q17 179.6 20 179.6 L192.8 179.6 Q195.8 179.6 195.8 182.6 L195.8 190.0 Z" fill="#aca895" />
<text x="19.5" y="187.9" font-size="8.5" fill="#f4f2ea" textLength="25.200000000000003" lengthAdjust="spacingAndGlyphs" font-weight="bold">3D 表示</text>
<path d="M186 184.6 L189 182.1 L192 184.6 M186 187.6 L189 185.1 L192 187.6" fill="none" stroke="#f4f2ea" stroke-width="1" />
<rect x="27.5" y="190.0" width="70.6" height="10" fill="#ebeae4" />
<rect x="98.1" y="190.0" width="97.7" height="10" fill="#ffffff" />
<line x1="27.5" y1="199.5" x2="195.8" y2="199.5" stroke="#d4d2c8" stroke-width="1"/>
<text x="30" y="197.4" font-size="8" fill="#000" textLength="31.0" lengthAdjust="spacingAndGlyphs" stroke="#000" stroke-width="0.12">マテリアル</text>
<text x="100" y="197.4" font-size="8" fill="#000" textLength="25.200000000000003" lengthAdjust="spacingAndGlyphs" stroke="#000" stroke-width="0.12">ByLayer</text>
<rect x="27.5" y="200.0" width="70.6" height="10" fill="#ebeae4" />
<rect x="98.1" y="200.0" width="97.7" height="10" fill="#ffffff" />
<line x1="27.5" y1="209.5" x2="195.8" y2="209.5" stroke="#d4d2c8" stroke-width="1"/>
<text x="30" y="207.4" font-size="8" fill="#000" textLength="37.2" lengthAdjust="spacingAndGlyphs" stroke="#000" stroke-width="0.12">影による表示</text>
<text x="100" y="207.4" font-size="8" fill="#000" textLength="56.400000000000006" lengthAdjust="spacingAndGlyphs" stroke="#000" stroke-width="0.12">影を投じる/受ける</text>
<line x1="27.5" y1="190.0" x2="27.5" y2="210.0" stroke="#c8c6bc" stroke-width="1"/>
<line x1="98.1" y1="190.0" x2="98.1" y2="210.0" stroke="#d4d2c8" stroke-width="1"/>
<line x1="195.5" y1="190.0" x2="195.5" y2="210.0" stroke="#d8d6cc" stroke-width="1"/>
<line x1="27.5" y1="209.5" x2="195.8" y2="209.5" stroke="#c8c6bc" stroke-width="1"/>
<path d="M17 224.8 L17 217.4 Q17 214.4 20 214.4 L192.8 214.4 Q195.8 214.4 195.8 217.4 L195.8 224.8 Z" fill="#aca895" />
<text x="19.5" y="222.70000000000002" font-size="8.5" fill="#f4f2ea" textLength="41.4" lengthAdjust="spacingAndGlyphs" font-weight="bold">印刷スタイル</text>
<path d="M186 219.4 L189 216.9 L192 219.4 M186 222.4 L189 219.9 L192 222.4" fill="none" stroke="#f4f2ea" stroke-width="1" />
<rect x="27.5" y="224.8" width="70.6" height="10" fill="#ebeae4" />
<rect x="98.1" y="224.8" width="97.7" height="10" fill="#f6f5f0" />
<line x1="27.5" y1="234.3" x2="195.8" y2="234.3" stroke="#d4d2c8" stroke-width="1"/>
<text x="30" y="232.20000000000002" font-size="8" fill="#000" textLength="37.2" lengthAdjust="spacingAndGlyphs" stroke="#000" stroke-width="0.12">印刷スタイル</text>
<text x="100" y="232.20000000000002" font-size="8" fill="#000" textLength="25.200000000000003" lengthAdjust="spacingAndGlyphs" stroke="#000" stroke-width="0.12">ByColor</text>
<rect x="27.5" y="234.8" width="70.6" height="10" fill="#ebeae4" />
<rect x="98.1" y="234.8" width="97.7" height="10" fill="#ffffff" />
<line x1="27.5" y1="244.3" x2="195.8" y2="244.3" stroke="#d4d2c8" stroke-width="1"/>
<text x="30" y="242.20000000000002" font-size="8" fill="#000" textLength="65.00000000000001" lengthAdjust="spacingAndGlyphs" stroke="#000" stroke-width="0.12">印刷スタイル テーブル</text>
<text x="100" y="242.20000000000002" font-size="8" fill="#000" textLength="48.00000000000001" lengthAdjust="spacingAndGlyphs" stroke="#000" stroke-width="0.12">A3電子納品.ctb</text>
<rect x="27.5" y="244.8" width="70.6" height="10" fill="#ebeae4" />
<rect x="98.1" y="244.8" width="97.7" height="10" fill="#f6f5f0" />
<line x1="27.5" y1="254.3" x2="195.8" y2="254.3" stroke="#d4d2c8" stroke-width="1"/>
<text x="30" y="252.20000000000002" font-size="8" fill="#000" textLength="66" lengthAdjust="spacingAndGlyphs" stroke="#000" stroke-width="0.12">アタッチされた印刷テ...</text>
<text x="100" y="252.20000000000002" font-size="8" fill="#000" textLength="19.799999999999997" lengthAdjust="spacingAndGlyphs" stroke="#000" stroke-width="0.12">モデル</text>
<rect x="27.5" y="254.8" width="70.6" height="10" fill="#ebeae4" />
<rect x="98.1" y="254.8" width="97.7" height="10" fill="#f6f5f0" />
<line x1="27.5" y1="264.3" x2="195.8" y2="264.3" stroke="#d4d2c8" stroke-width="1"/>
<text x="30" y="262.2" font-size="8" fill="#000" textLength="62.000000000000014" lengthAdjust="spacingAndGlyphs" stroke="#000" stroke-width="0.12">印刷テーブルのタイプ</text>
<text x="100" y="262.2" font-size="8" fill="#000" textLength="52.800000000000004" lengthAdjust="spacingAndGlyphs" stroke="#000" stroke-width="0.12">使用できません。</text>
<line x1="27.5" y1="224.8" x2="27.5" y2="264.8" stroke="#c8c6bc" stroke-width="1"/>
<line x1="98.1" y1="224.8" x2="98.1" y2="264.8" stroke="#d4d2c8" stroke-width="1"/>
<line x1="195.5" y1="224.8" x2="195.5" y2="264.8" stroke="#d8d6cc" stroke-width="1"/>
<line x1="27.5" y1="264.3" x2="195.8" y2="264.3" stroke="#c8c6bc" stroke-width="1"/>
<path d="M17 279.59999999999997 L17 272.2 Q17 269.2 20 269.2 L192.8 269.2 Q195.8 269.2 195.8 272.2 L195.8 279.59999999999997 Z" fill="#aca895" />
<text x="19.5" y="277.5" font-size="8.5" fill="#f4f2ea" textLength="20.700000000000003" lengthAdjust="spacingAndGlyphs" font-weight="bold">ビュー</text>
<path d="M186 274.2 L189 271.7 L192 274.2 M186 277.2 L189 274.7 L192 277.2" fill="none" stroke="#f4f2ea" stroke-width="1" />
<rect x="27.5" y="279.59999999999997" width="70.6" height="10" fill="#ebeae4" />
<rect x="98.1" y="279.59999999999997" width="97.7" height="10" fill="#f6f5f0" />
<line x1="27.5" y1="289.09999999999997" x2="195.8" y2="289.09999999999997" stroke="#d4d2c8" stroke-width="1"/>
<text x="30" y="286.99999999999994" font-size="8" fill="#000" textLength="19.2" lengthAdjust="spacingAndGlyphs" stroke="#000" stroke-width="0.12">中心 X</text>
<text x="100" y="286.99999999999994" font-size="8" fill="#000" textLength="36.00000000000001" lengthAdjust="spacingAndGlyphs" stroke="#000" stroke-width="0.12">163539.778</text>
<rect x="27.5" y="289.59999999999997" width="70.6" height="10" fill="#ebeae4" />
<rect x="98.1" y="289.59999999999997" width="97.7" height="10" fill="#f6f5f0" />
<line x1="27.5" y1="299.09999999999997" x2="195.8" y2="299.09999999999997" stroke="#d4d2c8" stroke-width="1"/>
<text x="30" y="296.99999999999994" font-size="8" fill="#000" textLength="19.2" lengthAdjust="spacingAndGlyphs" stroke="#000" stroke-width="0.12">中心 Y</text>
<text x="100" y="296.99999999999994" font-size="8" fill="#000" textLength="32.400000000000006" lengthAdjust="spacingAndGlyphs" stroke="#000" stroke-width="0.12">70918.261</text>
<rect x="27.5" y="299.59999999999997" width="70.6" height="10" fill="#ebeae4" />
<rect x="98.1" y="299.59999999999997" width="97.7" height="10" fill="#f6f5f0" />
<line x1="27.5" y1="309.09999999999997" x2="195.8" y2="309.09999999999997" stroke="#d4d2c8" stroke-width="1"/>
<text x="30" y="306.99999999999994" font-size="8" fill="#000" textLength="19.2" lengthAdjust="spacingAndGlyphs" stroke="#000" stroke-width="0.12">中心 Z</text>
<text x="100" y="306.99999999999994" font-size="8" fill="#000" textLength="18.0" lengthAdjust="spacingAndGlyphs" stroke="#000" stroke-width="0.12">0.000</text>
<rect x="27.5" y="309.59999999999997" width="70.6" height="10" fill="#ebeae4" />
<rect x="98.1" y="309.59999999999997" width="97.7" height="10" fill="#f6f5f0" />
<line x1="27.5" y1="319.09999999999997" x2="195.8" y2="319.09999999999997" stroke="#d4d2c8" stroke-width="1"/>
<text x="30" y="316.99999999999994" font-size="8" fill="#000" textLength="12.4" lengthAdjust="spacingAndGlyphs" stroke="#000" stroke-width="0.12">高さ</text>
<text x="100" y="316.99999999999994" font-size="8" fill="#000" textLength="32.400000000000006" lengthAdjust="spacingAndGlyphs" stroke="#000" stroke-width="0.12">20274.425</text>
<rect x="27.5" y="319.59999999999997" width="70.6" height="10" fill="#ebeae4" />
<rect x="98.1" y="319.59999999999997" width="97.7" height="10" fill="#f6f5f0" />
<line x1="27.5" y1="329.09999999999997" x2="195.8" y2="329.09999999999997" stroke="#d4d2c8" stroke-width="1"/>
<text x="30" y="326.99999999999994" font-size="8" fill="#000" textLength="6.2" lengthAdjust="spacingAndGlyphs" stroke="#000" stroke-width="0.12">幅</text>
<text x="100" y="326.99999999999994" font-size="8" fill="#000" textLength="32.400000000000006" lengthAdjust="spacingAndGlyphs" stroke="#000" stroke-width="0.12">28644.600</text>
<line x1="27.5" y1="279.59999999999997" x2="27.5" y2="329.59999999999997" stroke="#c8c6bc" stroke-width="1"/>
<line x1="98.1" y1="279.59999999999997" x2="98.1" y2="329.59999999999997" stroke="#d4d2c8" stroke-width="1"/>
<line x1="195.5" y1="279.59999999999997" x2="195.5" y2="329.59999999999997" stroke="#d8d6cc" stroke-width="1"/>
<line x1="27.5" y1="329.09999999999997" x2="195.8" y2="329.09999999999997" stroke="#c8c6bc" stroke-width="1"/>
<path d="M17 344.4 L17 337 Q17 334 20 334 L192.8 334 Q195.8 334 195.8 337 L195.8 344.4 Z" fill="#aca895" />
<text x="19.5" y="342.3" font-size="8.5" fill="#f4f2ea" textLength="20.700000000000003" lengthAdjust="spacingAndGlyphs" font-weight="bold">その他</text>
<path d="M186 339 L189 336.5 L192 339 M186 342 L189 339.5 L192 342" fill="none" stroke="#f4f2ea" stroke-width="1" />
<rect x="27.5" y="344.4" width="70.6" height="10" fill="#ebeae4" />
<rect x="98.1" y="344.4" width="97.7" height="10" fill="#ffffff" />
<line x1="27.5" y1="353.9" x2="195.8" y2="353.9" stroke="#d4d2c8" stroke-width="1"/>
<text x="30" y="351.79999999999995" font-size="8" fill="#000" textLength="24.8" lengthAdjust="spacingAndGlyphs" stroke="#000" stroke-width="0.12">注釈尺度</text>
<text x="100" y="351.79999999999995" font-size="8" fill="#000" textLength="18.0" lengthAdjust="spacingAndGlyphs" stroke="#000" stroke-width="0.12">1:1_1</text>
<rect x="27.5" y="354.4" width="70.6" height="10" fill="#ebeae4" />
<rect x="98.1" y="354.4" width="97.7" height="10" fill="#ffffff" />
<line x1="27.5" y1="363.9" x2="195.8" y2="363.9" stroke="#d4d2c8" stroke-width="1"/>
<text x="30" y="361.79999999999995" font-size="8" fill="#000" textLength="54.60000000000001" lengthAdjust="spacingAndGlyphs" stroke="#000" stroke-width="0.12">UCS アイコン オン</text>
<text x="100" y="361.79999999999995" font-size="8" fill="#000" textLength="13.2" lengthAdjust="spacingAndGlyphs" stroke="#000" stroke-width="0.12">はい</text>
<rect x="27.5" y="364.4" width="70.6" height="10" fill="#ebeae4" />
<rect x="98.1" y="364.4" width="97.7" height="10" fill="#ffffff" />
<line x1="27.5" y1="373.9" x2="195.8" y2="373.9" stroke="#d4d2c8" stroke-width="1"/>
<text x="30" y="371.79999999999995" font-size="8" fill="#000" textLength="60.80000000000001" lengthAdjust="spacingAndGlyphs" stroke="#000" stroke-width="0.12">原点に UCS アイコン</text>
<text x="100" y="371.79999999999995" font-size="8" fill="#000" textLength="19.799999999999997" lengthAdjust="spacingAndGlyphs" stroke="#000" stroke-width="0.12">いいえ</text>
<rect x="27.5" y="374.4" width="70.6" height="10" fill="#ebeae4" />
<rect x="98.1" y="374.4" width="97.7" height="10" fill="#ffffff" />
<line x1="27.5" y1="383.9" x2="195.8" y2="383.9" stroke="#d4d2c8" stroke-width="1"/>
<text x="30" y="381.79999999999995" font-size="8" fill="#000" textLength="66" lengthAdjust="spacingAndGlyphs" stroke="#000" stroke-width="0.12">ビューポートごとの UCS</text>
<text x="100" y="381.79999999999995" font-size="8" fill="#000" textLength="13.2" lengthAdjust="spacingAndGlyphs" stroke="#000" stroke-width="0.12">はい</text>
<rect x="27.5" y="384.4" width="70.6" height="10" fill="#ebeae4" />
<rect x="98.1" y="384.4" width="97.7" height="10" fill="#f6f5f0" />
<line x1="27.5" y1="393.9" x2="195.8" y2="393.9" stroke="#d4d2c8" stroke-width="1"/>
<text x="30" y="391.79999999999995" font-size="8" fill="#000" textLength="20.599999999999998" lengthAdjust="spacingAndGlyphs" stroke="#000" stroke-width="0.12">UCS 名</text>
<rect x="27.5" y="394.4" width="70.6" height="10" fill="#ebeae4" />
<rect x="98.1" y="394.4" width="97.7" height="10" fill="#ffffff" />
<line x1="27.5" y1="403.9" x2="195.8" y2="403.9" stroke="#d4d2c8" stroke-width="1"/>
<text x="30" y="401.79999999999995" font-size="8" fill="#000" textLength="37.2" lengthAdjust="spacingAndGlyphs" stroke="#000" stroke-width="0.12">表示スタイル</text>
<text x="100" y="401.79999999999995" font-size="8" fill="#000" textLength="56.400000000000006" lengthAdjust="spacingAndGlyphs" stroke="#000" stroke-width="0.12">2D ワイヤフレーム</text>
<line x1="27.5" y1="344.4" x2="27.5" y2="404.4" stroke="#c8c6bc" stroke-width="1"/>
<line x1="98.1" y1="344.4" x2="98.1" y2="404.4" stroke="#d4d2c8" stroke-width="1"/>
<line x1="195.5" y1="344.4" x2="195.5" y2="404.4" stroke="#d8d6cc" stroke-width="1"/>
<line x1="27.5" y1="403.9" x2="195.8" y2="403.9" stroke="#c8c6bc" stroke-width="1"/>
<rect x="17.5" y="540" width="179" height="19" fill="#ebeae4" stroke="#c8c6bc" stroke-width="1"/>
<rect x="203.3" y="68" width="9.7" height="498" fill="#e6e3cf" />
<rect x="199.5" y="68" width="13.5" height="86" fill="#e7e6df" />
<path d="M203.3 153.7 L211.8 153.7 L211.8 241 L203.3 241 Z M203.3 241 L211.8 241 L211.8 326.5 Q211.8 327 210 327 L205 327 Q203.3 327 203.3 325 Z" fill="#ebe9e0" stroke="#8a8878" stroke-width="0.9"/>
<text x="-124.3" y="211.3" font-size="8" fill="#111" textLength="26" lengthAdjust="spacingAndGlyphs" transform="rotate(-90)" font-weight="bold">デザイン</text>
<text x="-222" y="210.8" font-size="7.5" fill="#111" textLength="49" lengthAdjust="spacingAndGlyphs" transform="rotate(-90)" stroke="#111" stroke-width="0.2">オブジェクト クラス</text>
<text x="-308" y="210.8" font-size="7.5" fill="#111" textLength="45" lengthAdjust="spacingAndGlyphs" transform="rotate(-90)" stroke="#111" stroke-width="0.2">表示マネージャ</text>
<rect x="213" y="68" width="2.2" height="498" fill="#f4f2e8" />
<rect x="215.2" y="68" width="2" height="498" fill="#e8e6d6" />
<line x1="218" y1="68" x2="218" y2="566" stroke="#4a4a40" stroke-width="1.3"/>
<rect x="219" y="479" width="36" height="9" fill="#e4e2d6" />
<line x1="228.1" y1="479.5" x2="228.1" y2="487.5" stroke="#fff" stroke-width="1"/>
<line x1="236.7" y1="479.5" x2="236.7" y2="487.5" stroke="#fff" stroke-width="1"/>
<line x1="245.3" y1="479.5" x2="245.3" y2="487.5" stroke="#fff" stroke-width="1"/>
<line x1="253.9" y1="479.5" x2="253.9" y2="487.5" stroke="#fff" stroke-width="1"/>
<path d="M221.5 480.5 V486.5 M226.5 480.5 L223 483.5 L226.5 486.5 Z" fill="#a8a8a0" stroke="#a8a8a0" stroke-width="1" />
<path d="M234.5 480.5 L230.5 483.5 L234.5 486.5 Z" fill="#a8a8a0" />
<path d="M239 480.5 L243 483.5 L239 486.5 Z" fill="#a8a8a0" />
<path d="M248 480.5 L251.5 483.5 L248 486.5 Z M252.5 480.5 V486.5" fill="#a8a8a0" stroke="#a8a8a0" stroke-width="1" />
<path d="M284.5 479 L328 479 L325 487.8 L282 487.8" fill="#f2f1ea" stroke="#333" stroke-width="0.8" />
<path d="M255 479 L285.5 479 L282 488 L259 488 Z" fill="#000" />
<text x="260.7" y="487" font-size="9" fill="#fff" textLength="18" lengthAdjust="spacingAndGlyphs" stroke="#fff" stroke-width="0.25">モデル</text>
<text x="290" y="487" font-size="9" fill="#000" textLength="30" lengthAdjust="spacingAndGlyphs" stroke="#000" stroke-width="0.25">レイアウト1</text>
<line x1="219" y1="488.5" x2="800" y2="488.5" stroke="#fff" stroke-width="1"/>
<line x1="222.0" y1="490" x2="222.0" y2="506" stroke="#b8b4a0" stroke-width="1"/>
<line x1="223.0" y1="490" x2="223.0" y2="506" stroke="#fff" stroke-width="1"/>
<line x1="224.0" y1="490" x2="224.0" y2="506" stroke="#b8b4a0" stroke-width="1"/>
<g transform="translate(227.7,494.2)"><path d="M1 1 V9.5 M9.5 1 V9.5 M1 4 H9.5" stroke="#1a1a1a" stroke-width="1.3" fill="none"/></g>
<g transform="translate(242,494.2)"><path d="M0.5 1.5 L2.5 0.5 M8 9.5 L10 8.5 M1.5 1 L9 9" stroke="#1a1a1a" stroke-width="1.5" fill="none"/><path d="M2 4 L4 2" stroke="#1a1a1a" stroke-width="1"/></g>
<g transform="translate(257,494.2)"><path d="M1 9.5 Q1 2 8.5 1.5" stroke="#4a6a90" stroke-width="1.2" fill="none"/><path d="M3.5 9.5 Q3.5 4.5 8.5 4" stroke="#1a1a1a" stroke-width="1.3" fill="none"/><circle cx="8.5" cy="1.5" r="1" fill="#1a1a1a"/></g>
<g transform="translate(271.2,494.2)"><path d="M1 9 H9.5 M1 9 V3 M3.5 9 V5 M3.5 5 L8.5 0.5 M6 9 V3" stroke="#1a1a1a" stroke-width="1.1" fill="none"/><path d="M1 1 h2 M1 6 h2" stroke="#1a1a1a" stroke-width="0.8" stroke-dasharray="1 1"/></g>
<g transform="translate(288.5,494.2)"><circle cx="5" cy="5.5" r="4.2" fill="none" stroke="#1a1a1a" stroke-width="1.1"/><path d="M5 5.5 L2 2.5" stroke="#1a1a1a" stroke-width="1.4"/></g>
<g transform="translate(304,494.2)"><circle cx="5" cy="5.5" r="4.2" fill="none" stroke="#1a1a1a" stroke-width="1.1" stroke-dasharray="20 6"/><path d="M2 8.5 L5 5 L4.5 6.5 L8 2" stroke="#1a1a1a" stroke-width="1.6" fill="none"/></g>
<g transform="translate(317.7,494.2)"><circle cx="5" cy="5.5" r="4.2" fill="none" stroke="#1a1a1a" stroke-width="1.1"/><path d="M2 2.5 L8 8.5" stroke="#1a1a1a" stroke-width="1.4"/></g>
<g transform="translate(331.7,494.2)"><path d="M0.5 9.5 H9.5 L5 1.5 Z" fill="none" stroke="#1a1a1a" stroke-width="1.1"/><path d="M3 3.5 Q6 1.5 8.5 3.5" stroke="#1a1a1a" stroke-width="1" fill="none"/></g>
<g transform="translate(349.7,494.2)"><path d="M1 0.5 V9.5 M9 0.5 V9.5 M1 2 H9" stroke="#1a1a1a" stroke-width="1.3" fill="none"/><path d="M2 3 L8 9" stroke="#c8c830" stroke-width="2.2"/></g>
<g transform="translate(364.7,494.2)"><path d="M1 1 V9.5 M9.5 1 V9.5 M1 4 H9.5 M5 4 V9.5 M1 1.5 H9.5" stroke="#1a1a1a" stroke-width="1.1" fill="none"/></g>
<g transform="translate(379,494.2)"><path d="M1 1 V9.5 M5 1 V9.5 M9.5 1 V9.5 M1 4 H9.5" stroke="#1a1a1a" stroke-width="1.1" fill="none"/></g>
<g transform="translate(394,494.2)"><path d="M0.5 1 H9.5 M0.5 9 H9.5 M2.5 1 V9 M7.5 1 V9 M2.5 5 H7.5" stroke="#1a1a1a" stroke-width="1.2" fill="none"/></g>
<g transform="translate(408.2,494.2)"><path d="M5 0.5 V9.5 M0.5 5 H3.5 M6.5 5 H9.5" stroke="#1a1a1a" stroke-width="1.1" fill="none"/><path d="M7 4 L9.5 5 L7 6" fill="#1a1a1a"/></g>
<g transform="translate(426.2,494.2)"><rect x="0.5" y="1.5" width="9.5" height="7.5" fill="#4a70b8" stroke="#2a3a70" stroke-width="0.8"/><path d="M2 3.5 h2.5 M2 6.5 h2.5 M6 3.5 h2.5 M6 6.5 h2.5" stroke="#e8f0ff" stroke-width="1.2"/></g>
<g transform="translate(441,494.2)"><circle cx="5" cy="5" r="4.3" fill="none" stroke="#1a1a1a" stroke-width="1.1"/><circle cx="5" cy="5" r="1.3" fill="#1a1a1a"/></g>
<g transform="translate(454.5,494.2)"><path d="M0.5 2 V6 M9.5 2 V6 M0.5 3.5 H9.5" stroke="#1a1a1a" stroke-width="1.2" fill="none"/><path d="M2.5 6 L4.5 9 L8.5 4" stroke="#30a030" stroke-width="1.8" fill="none"/></g>
<g transform="translate(469.5,494.2)"><path d="M0.5 6 L2 3 L3.5 7 L6 2 L7.5 7 L9.5 4" stroke="#1a1a1a" stroke-width="1.2" fill="none"/></g>
<g transform="translate(487.5,494.2)"><text x="1.5" y="7" font-size="8" font-weight="bold" fill="#1a2a60" font-family="Liberation Sans">A</text><path d="M0.5 8.5 H10 M0.5 7 V10 M10 7 V10" stroke="#1a1a1a" stroke-width="1.1"/></g>
<g transform="translate(501.7,494.2)"><path d="M2 8 L9 0.5" stroke="#c8a030" stroke-width="2"/><path d="M0.5 8.5 H10 M0.5 7 V10 M10 7 V10" stroke="#1a1a1a" stroke-width="1.1"/></g>
<g transform="translate(516,494.2)"><rect x="1.5" y="1.5" width="7" height="4" fill="#3a4a70"/><path d="M1 0.5 V9.5 M9 0.5 V9.5 M1 7 H9" stroke="#1a1a1a" stroke-width="1.3"/></g>
<g transform="translate(609.5,494.2)"><path d="M0.5 9 H10 M2 9 L8.5 2 L9.5 3" stroke="#1a1a1a" stroke-width="1.4" fill="none"/><path d="M0.5 6.5 V9.5 M4 5 L6.5 8" stroke="#1a1a1a" stroke-width="1"/></g>
<g transform="translate(635,494.2)"><rect x="0.5" y="0.5" width="9.5" height="9.5" fill="#7a9ac8" stroke="#2a4070" stroke-width="0.9"/><rect x="2" y="2" width="4" height="3" fill="#e8f0f8"/><rect x="3.5" y="5.5" width="5.5" height="3.5" fill="#c8d8ec"/></g>
<g transform="translate(650,494.2)"><rect x="0.5" y="0.5" width="9.5" height="9.5" fill="#6a8ab8" stroke="#2a4070" stroke-width="0.9"/><rect x="2" y="2" width="6.5" height="6.5" fill="#a8c4e4"/></g>
<g transform="translate(664.2,494.2)"><path d="M0.5 10 V5 H5 V0.5 H10 V10 Z" fill="#7a9ac8" stroke="#2a4070" stroke-width="0.9"/></g>
<g transform="translate(678.5,494.2)"><rect x="0.5" y="0.5" width="6" height="4.5" fill="#e8e070" stroke="#6a6a30" stroke-width="0.8"/><rect x="3.5" y="4.5" width="6.5" height="5.5" fill="#6a8ab8" stroke="#2a4070" stroke-width="0.9"/><path d="M7 1 L9 3 L7 5" stroke="#111" stroke-width="0.9" fill="none"/></g>
<g transform="translate(692.7,494.2)"><rect x="0.5" y="0.5" width="5.5" height="4" fill="#8aa0c8" stroke="#2a4070" stroke-width="0.8"/><rect x="0.5" y="5.5" width="5.5" height="4.5" fill="#5a7ab0" stroke="#2a4070" stroke-width="0.8"/><circle cx="8" cy="4" r="1.4" fill="none" stroke="#111" stroke-width="0.8"/><circle cx="8" cy="7" r="1.4" fill="none" stroke="#111" stroke-width="0.8"/></g>
<line x1="285.5" y1="491" x2="285.5" y2="505" stroke="#c5c2b2" stroke-width="1"/>
<line x1="286.5" y1="491" x2="286.5" y2="505" stroke="#fff" stroke-width="1"/>
<line x1="346.5" y1="491" x2="346.5" y2="505" stroke="#c5c2b2" stroke-width="1"/>
<line x1="347.5" y1="491" x2="347.5" y2="505" stroke="#fff" stroke-width="1"/>
<line x1="422.5" y1="491" x2="422.5" y2="505" stroke="#c5c2b2" stroke-width="1"/>
<line x1="423.5" y1="491" x2="423.5" y2="505" stroke="#fff" stroke-width="1"/>
<line x1="484.0" y1="491" x2="484.0" y2="505" stroke="#c5c2b2" stroke-width="1"/>
<line x1="485.0" y1="491" x2="485.0" y2="505" stroke="#fff" stroke-width="1"/>
<line x1="530.5" y1="491" x2="530.5" y2="505" stroke="#c5c2b2" stroke-width="1"/>
<line x1="531.5" y1="491" x2="531.5" y2="505" stroke="#fff" stroke-width="1"/>
<rect x="533.2" y="492.8" width="74.3" height="12.4" fill="#fff" />
<rect x="533.7" y="493.3" width="73.3" height="11.4" fill="none" stroke="#a0a8b8" stroke-width="1"/>
<text x="544.4" y="502" font-size="8" fill="#111" textLength="20.5" lengthAdjust="spacingAndGlyphs" >S-100</text>
<rect x="597.5" y="493.8" width="9.7" height="10.5" fill="#b6c8f0" rx="1"/>
<path d="M599.85 497.55 L602.35 500.05 L604.85 497.55" fill="none" stroke="#2a3a8a" stroke-width="1.4" />
<line x1="624.5" y1="490" x2="624.5" y2="506" stroke="#b0ac98" stroke-width="1"/>
<line x1="628.0" y1="490" x2="628.0" y2="506" stroke="#b8b4a0" stroke-width="1"/>
<line x1="629.0" y1="490" x2="629.0" y2="506" stroke="#fff" stroke-width="1"/>
<line x1="630.0" y1="490" x2="630.0" y2="506" stroke="#b8b4a0" stroke-width="1"/>
<rect x="709.3" y="492.9" width="62.5" height="13" fill="#eceadc" />
<rect x="709.8" y="493.4" width="61.5" height="12" fill="none" stroke="#d0ccbc" stroke-width="1"/>
<rect x="761" y="494" width="10" height="11" fill="#f0efe6" />
<path d="M763.5 498 L766 500.5 L768.5 498" fill="none" stroke="#b8b8b8" stroke-width="1.2" />
<line x1="774" y1="490" x2="774" y2="506" stroke="#b0ac98" stroke-width="1"/>
<line x1="219" y1="507.5" x2="800" y2="507.5" stroke="#c8c4b0" stroke-width="1"/>
<line x1="219" y1="510.2" x2="797" y2="510.2" stroke="#9c9888" stroke-width="1.2"/>
<line x1="219" y1="511.5" x2="800" y2="511.5" stroke="#fff" stroke-width="1"/>
<line x1="222.5" y1="513" x2="222.5" y2="565" stroke="#b8b4a0" stroke-width="1"/>
<line x1="223.5" y1="513" x2="223.5" y2="565" stroke="#fff" stroke-width="1"/>
<line x1="224.5" y1="513" x2="224.5" y2="565" stroke="#b8b4a0" stroke-width="1"/>
<rect x="228.6" y="516.8" width="555.7" height="49" fill="#fff" />
<line x1="228.6" y1="516.5" x2="784.3" y2="516.5" stroke="#6a6a5a" stroke-width="1.3"/>
<line x1="228.8" y1="516.8" x2="228.8" y2="566" stroke="#808070" stroke-width="1"/>
<line x1="228.6" y1="555" x2="742.7" y2="555" stroke="#909088" stroke-width="1"/>
<text x="229.5" y="525" font-size="7.6" fill="#000" textLength="87.10000000000002" lengthAdjust="spacingAndGlyphs" font-family="Liberation Mono, monospace" stroke="#000" stroke-width="0.12">コマンド: &#39;_.ZOOM _e</text>
<text x="229.5" y="532.6" font-size="7.6" fill="#000" textLength="38.37" lengthAdjust="spacingAndGlyphs" font-family="Liberation Mono, monospace" stroke="#000" stroke-width="0.12">コマンド:</text>
<text x="229.5" y="540.2" font-size="7.6" fill="#000" textLength="38.37" lengthAdjust="spacingAndGlyphs" font-family="Liberation Mono, monospace" stroke="#000" stroke-width="0.12">コマンド:</text>
<text x="229.5" y="547.8" font-size="7.6" fill="#000" textLength="166.8400000000001" lengthAdjust="spacingAndGlyphs" font-family="Liberation Mono, monospace" stroke="#000" stroke-width="0.12">コマンド: _copylink モデルを再作図中。</text>
<text x="229.5" y="563.5" font-size="7.6" fill="#000" textLength="38.37" lengthAdjust="spacingAndGlyphs" font-family="Liberation Mono, monospace" stroke="#000" stroke-width="0.12">コマンド:</text>
<rect x="784.3" y="516.8" width="9.2" height="38" fill="#f4f6fc" />
<rect x="784.5" y="518.9" width="9" height="8.600000000000023" fill="#b8ccf4" rx="1.2"/>
<rect x="784.5" y="533.9" width="9" height="9.200000000000045" fill="#b8ccf4" rx="1.2"/>
<rect x="784.5" y="544.3" width="9" height="9.200000000000045" fill="#b8ccf4" rx="1.2"/>
<path d="M786.5 525 L789 522 L791.5 525" fill="none" stroke="#2a3a7a" stroke-width="1.4" />
<path d="M786.5 547.5 L789 550.5 L791.5 547.5" fill="none" stroke="#2a3a7a" stroke-width="1.4" />
<line x1="786.5" y1="536.5" x2="791.5" y2="536.5" stroke="#8a9ac8" stroke-width="0.8"/>
<line x1="786.5" y1="538.5" x2="791.5" y2="538.5" stroke="#8a9ac8" stroke-width="0.8"/>
<line x1="786.5" y1="540.5" x2="791.5" y2="540.5" stroke="#8a9ac8" stroke-width="0.8"/>
<rect x="742.7" y="554.7" width="41.6" height="9.3" fill="#f4f6fc" />
<rect x="742.7" y="555" width="9.3" height="9" fill="#b8ccf4" rx="1.2"/>
<rect x="753" y="555" width="9.9" height="9" fill="#c4d4f4" rx="1.2"/>
<rect x="772.7" y="555" width="9.8" height="9" fill="#b8ccf4" rx="1.2"/>
<path d="M749 557 L746 559.5 L749 562" fill="none" stroke="#2a3a7a" stroke-width="1.4" />
<path d="M776.5 557 L779.5 559.5 L776.5 562" fill="none" stroke="#2a3a7a" stroke-width="1.4" />
<line x1="794" y1="511" x2="794" y2="566" stroke="#b8b4a0" stroke-width="1"/>
<rect x="794.5" y="511" width="5.5" height="55" fill="#f0eee4" />
<rect x="7" y="566" width="793" height="5" fill="#e6e3d2" />
<line x1="7" y1="566.8" x2="800" y2="566.8" stroke="#8c8a7c" stroke-width="1.2"/>
<line x1="7" y1="568" x2="800" y2="568" stroke="#fff" stroke-width="1"/>
<line x1="9.5" y1="568" x2="9.5" y2="571" stroke="#a8a698" stroke-width="1"/>
<line x1="117.5" y1="568" x2="117.5" y2="571" stroke="#a8a698" stroke-width="1"/>
<line x1="145.5" y1="568" x2="145.5" y2="571" stroke="#a8a698" stroke-width="1"/>
<line x1="172.5" y1="568" x2="172.5" y2="571" stroke="#a8a698" stroke-width="1"/>
<line x1="230.5" y1="568" x2="230.5" y2="571" stroke="#a8a698" stroke-width="1"/>
<line x1="282.5" y1="568" x2="282.5" y2="571" stroke="#a8a698" stroke-width="1"/>
<line x1="300.5" y1="568" x2="300.5" y2="571" stroke="#a8a698" stroke-width="1"/>
<line x1="338.5" y1="568" x2="338.5" y2="571" stroke="#a8a698" stroke-width="1"/>
<line x1="396.5" y1="568" x2="396.5" y2="571" stroke="#a8a698" stroke-width="1"/>
<line x1="440.5" y1="568" x2="440.5" y2="571" stroke="#a8a698" stroke-width="1"/>
<line x1="490.5" y1="568" x2="490.5" y2="571" stroke="#a8a698" stroke-width="1"/>
<line x1="560.5" y1="568" x2="560.5" y2="571" stroke="#a8a698" stroke-width="1"/>
<line x1="640.5" y1="568" x2="640.5" y2="571" stroke="#a8a698" stroke-width="1"/>
<line x1="690.5" y1="568" x2="690.5" y2="571" stroke="#a8a698" stroke-width="1"/>
<line x1="745.5" y1="568" x2="745.5" y2="571" stroke="#a8a698" stroke-width="1"/>
<g clip-path="url(#dc)">
<rect x="344.5" y="101.5" width="424" height="300" fill="none" stroke="#a0a070" stroke-width="1.1"/>
<rect x="354.5" y="112.5" width="404" height="279" fill="none" stroke="#b4b488" stroke-width="1.1"/>
<text x="359" y="96" font-size="31" fill="#fff" textLength="24" lengthAdjust="spacingAndGlyphs" stroke="#000" stroke-width="0.5">A1</text>
<rect x="390" y="80.5" width="23" height="2.2" fill="#fff"/>
<rect x="390" y="88.3" width="23" height="2.2" fill="#fff"/>
<path d="M468 79 L483 93 M483 79 L468 93" stroke="#fff" stroke-width="2.2"/>
<text x="418" y="96" font-size="31" fill="#fff" textLength="39.5" lengthAdjust="spacingAndGlyphs" >841</text>
<text x="492" y="96" font-size="31" fill="#fff" textLength="41" lengthAdjust="spacingAndGlyphs" >594</text>
<text x="552" y="96" font-size="31" fill="#fff" textLength="12" lengthAdjust="spacingAndGlyphs" >S</text>
<rect x="565" y="80.5" width="13" height="2.2" fill="#fff"/>
<rect x="565" y="87.3" width="13" height="2.2" fill="#fff"/>
<text x="581" y="96" font-size="31" fill="#fff" textLength="10" lengthAdjust="spacingAndGlyphs" >1</text>
<rect x="599" y="82" width="3" height="3" fill="#fff"/>
<rect x="599" y="91.5" width="3" height="3" fill="#fff"/>
<text x="611" y="96" font-size="31" fill="#fff" textLength="28.5" lengthAdjust="spacingAndGlyphs" >25</text>
<rect x="373.5" y="93.2" width="3.5" height="4" fill="#000"/>
<rect x="379" y="93.2" width="3.5" height="4" fill="#000"/>
<rect x="445.5" y="93.2" width="5.5" height="4" fill="#000"/>
<rect x="453" y="93.2" width="3.5" height="4" fill="#000"/>
<rect x="581.5" y="93.2" width="3.5" height="4" fill="#000"/>
<rect x="587" y="93.2" width="3.5" height="4" fill="#000"/>
<line x1="287.5" y1="102" x2="335" y2="102" stroke="#c8c8c8" stroke-width="1.3"/>
<line x1="287.5" y1="401.6" x2="335" y2="401.6" stroke="#c8c8c8" stroke-width="1.3"/>
<line x1="298.5" y1="102" x2="298.5" y2="401.6" stroke="#c8c8c8" stroke-width="1"/>
<path d="M294.8 123 L298.5 102 L302.2 123 M294.8 381 L298.5 401.6 L302.2 381" fill="none" stroke="#c8c8c8" stroke-width="1"/>
<text x="-308.7" y="289" font-size="53" fill="#fff" textLength="110.3" lengthAdjust="spacingAndGlyphs" transform="rotate(-90)">14850</text>
<rect x="284.5" y="288.3" width="5" height="6.4" fill="#000"/>
<rect x="284.5" y="299" width="5" height="7.5" fill="#000"/>
<line x1="344.5" y1="413" x2="344.5" y2="477" stroke="#c8c8c8" stroke-width="1"/>
<line x1="768.5" y1="413" x2="768.5" y2="477" stroke="#c8c8c8" stroke-width="1"/>
<line x1="344" y1="466.5" x2="768" y2="466.5" stroke="#c8c8c8" stroke-width="1"/>
<path d="M365 463 L344 466.5 L365 470 M747 463 L768 466.5 L747 470" fill="none" stroke="#c8c8c8" stroke-width="1"/>
<text x="501" y="456.3" font-size="51.2" fill="#fff" textLength="110" lengthAdjust="spacingAndGlyphs" >21025</text>
<rect x="524.5" y="451.3" width="8.5" height="5" fill="#000"/>
<rect x="537" y="451.3" width="7" height="5" fill="#000"/>
<line x1="443.5" y1="141.6" x2="443.5" y2="347.0" stroke="#d0d0d0" stroke-width="1"/>
<line x1="605.5" y1="141.6" x2="605.5" y2="347.0" stroke="#d0d0d0" stroke-width="1"/>
<line x1="466.5" y1="141.6" x2="466.5" y2="347.0" stroke="#d0d0d0" stroke-width="1"/>
<line x1="506.5" y1="141.6" x2="506.5" y2="347.0" stroke="#d0d0d0" stroke-width="1"/>
<line x1="443" y1="141.5" x2="605.3" y2="141.5" stroke="#d0d0d0" stroke-width="1"/>
<line x1="443" y1="150.5" x2="605.3" y2="150.5" stroke="#d0d0d0" stroke-width="1"/>
<line x1="443" y1="347.5" x2="605.3" y2="347.5" stroke="#d0d0d0" stroke-width="1"/>
<text x="472.3" y="156.5" font-size="4.8" fill="#d8d860" textLength="11.75" lengthAdjust="spacingAndGlyphs" font-weight="bold" stroke="#d8d860" stroke-width="0.25">D-TTL</text>
<line x1="512.2" y1="154.60000000000002" x2="541.8" y2="154.60000000000002" stroke="#c8c850" stroke-width="1.3"/>
<line x1="466.1" y1="158.5" x2="605.3" y2="158.5" stroke="#d0d0d0" stroke-width="1"/>
<text x="472.3" y="165.05217391304348" font-size="4.8" fill="#d8d860" textLength="21.150000000000002" lengthAdjust="spacingAndGlyphs" font-weight="bold" stroke="#d8d860" stroke-width="0.25">D-TTL-FBW</text>
<line x1="512.2" y1="163.1521739130435" x2="541.8" y2="163.1521739130435" stroke="#c8c850" stroke-width="1.3"/>
<line x1="466.1" y1="167.5" x2="605.3" y2="167.5" stroke="#d0d0d0" stroke-width="1"/>
<text x="472.3" y="173.60434782608695" font-size="4.8" fill="#e8e8e8" textLength="23.5" lengthAdjust="spacingAndGlyphs" font-weight="bold" stroke="#e8e8e8" stroke-width="0.25">D-TTL-LINE</text>
<line x1="512.2" y1="171.70434782608697" x2="541.8" y2="171.70434782608697" stroke="#a0a0a0" stroke-width="1.3"/>
<line x1="466.1" y1="175.5" x2="605.3" y2="175.5" stroke="#d0d0d0" stroke-width="1"/>
<text x="472.3" y="182.15652173913043" font-size="4.8" fill="#e8e8e8" textLength="21.150000000000002" lengthAdjust="spacingAndGlyphs" font-weight="bold" stroke="#e8e8e8" stroke-width="0.25">D-TTL-TXT</text>
<line x1="512.2" y1="180.25652173913045" x2="541.8" y2="180.25652173913045" stroke="#a0a0a0" stroke-width="1.3"/>
<line x1="443" y1="184.5" x2="605.3" y2="184.5" stroke="#d0d0d0" stroke-width="1"/>
<text x="472.3" y="190.7086956521739" font-size="4.8" fill="#e8e8e8" textLength="11.75" lengthAdjust="spacingAndGlyphs" font-weight="bold" stroke="#e8e8e8" stroke-width="0.25">D-BSE</text>
<line x1="512.2" y1="188.80869565217392" x2="541.8" y2="188.80869565217392" stroke="#707070" stroke-width="1.3"/>
<line x1="466.1" y1="193.5" x2="605.3" y2="193.5" stroke="#d0d0d0" stroke-width="1"/>
<text x="472.3" y="199.26086956521738" font-size="4.8" fill="#e8e8e8" textLength="21.150000000000002" lengthAdjust="spacingAndGlyphs" font-weight="bold" stroke="#e8e8e8" stroke-width="0.25">D-BSE-DIM</text>
<line x1="512.2" y1="197.3608695652174" x2="541.8" y2="197.3608695652174" stroke="#c8c8c8" stroke-width="1.3"/>
<line x1="466.1" y1="201.5" x2="605.3" y2="201.5" stroke="#d0d0d0" stroke-width="1"/>
<text x="472.3" y="207.81304347826085" font-size="4.8" fill="#e8e8e8" textLength="21.150000000000002" lengthAdjust="spacingAndGlyphs" font-weight="bold" stroke="#e8e8e8" stroke-width="0.25">D-BSE-TXT</text>
<line x1="512.2" y1="205.91304347826087" x2="541.8" y2="205.91304347826087" stroke="#c8c8c8" stroke-width="1.3"/>
<line x1="466.1" y1="210.5" x2="605.3" y2="210.5" stroke="#d0d0d0" stroke-width="1"/>
<text x="472.3" y="216.36521739130433" font-size="4.8" fill="#e8e8e8" textLength="23.5" lengthAdjust="spacingAndGlyphs" font-weight="bold" stroke="#e8e8e8" stroke-width="0.25">D-BSE-HTXT</text>
<line x1="512.2" y1="214.46521739130435" x2="541.8" y2="214.46521739130435" stroke="#c8c8c8" stroke-width="1.3"/>
<line x1="443" y1="218.5" x2="605.3" y2="218.5" stroke="#d0d0d0" stroke-width="1"/>
<text x="472.3" y="224.9173913043478" font-size="4.8" fill="#d8d860" textLength="11.75" lengthAdjust="spacingAndGlyphs" font-weight="bold" stroke="#d8d860" stroke-width="0.25">D-BWR</text>
<line x1="512.2" y1="223.01739130434783" x2="528" y2="223.01739130434783" stroke="#a0a040" stroke-width="1.3"/>
<line x1="533" y1="223.01739130434783" x2="536" y2="223.01739130434783" stroke="#a0a040" stroke-width="1.3"/>
<line x1="466.1" y1="227.5" x2="605.3" y2="227.5" stroke="#d0d0d0" stroke-width="1"/>
<text x="472.3" y="233.46956521739128" font-size="4.8" fill="#e8e8e8" textLength="23.5" lengthAdjust="spacingAndGlyphs" font-weight="bold" stroke="#e8e8e8" stroke-width="0.25">D-BWR-HTXT</text>
<line x1="512.2" y1="231.5695652173913" x2="541.8" y2="231.5695652173913" stroke="#c8c8c8" stroke-width="1.3"/>
<line x1="443" y1="235.5" x2="605.3" y2="235.5" stroke="#d0d0d0" stroke-width="1"/>
<text x="472.3" y="242.02173913043475" font-size="4.8" fill="#e03030" textLength="11.75" lengthAdjust="spacingAndGlyphs" font-weight="bold" stroke="#e03030" stroke-width="0.25">D-STR</text>
<line x1="512.2" y1="240.12173913043478" x2="541.8" y2="240.12173913043478" stroke="#d02020" stroke-width="1.3"/>
<line x1="466.1" y1="244.5" x2="605.3" y2="244.5" stroke="#d0d0d0" stroke-width="1"/>
<text x="472.3" y="250.57391304347823" font-size="4.8" fill="#c8c850" textLength="23.5" lengthAdjust="spacingAndGlyphs" font-weight="bold" stroke="#c8c850" stroke-width="0.25">D-STR-STR1</text>
<line x1="512.2" y1="248.67391304347825" x2="541.8" y2="248.67391304347825" stroke="#a8a840" stroke-width="1.3"/>
<line x1="466.1" y1="252.5" x2="605.3" y2="252.5" stroke="#d0d0d0" stroke-width="1"/>
<text x="472.3" y="259.12608695652176" font-size="4.8" fill="#40d040" textLength="23.5" lengthAdjust="spacingAndGlyphs" font-weight="bold" stroke="#40d040" stroke-width="0.25">D-STR-STR2</text>
<line x1="512.2" y1="257.2260869565217" x2="541.8" y2="257.2260869565217" stroke="#30a030" stroke-width="1.3"/>
<line x1="466.1" y1="261.5" x2="605.3" y2="261.5" stroke="#d0d0d0" stroke-width="1"/>
<text x="472.3" y="267.67826086956524" font-size="4.8" fill="#40c0c0" textLength="23.5" lengthAdjust="spacingAndGlyphs" font-weight="bold" stroke="#40c0c0" stroke-width="0.25">D-STR-STR3</text>
<line x1="512.2" y1="265.77826086956526" x2="541.8" y2="265.77826086956526" stroke="#30a0a0" stroke-width="1.3"/>
<line x1="466.1" y1="270.5" x2="605.3" y2="270.5" stroke="#d0d0d0" stroke-width="1"/>
<text x="472.3" y="276.2304347826087" font-size="4.8" fill="#3030d0" textLength="23.5" lengthAdjust="spacingAndGlyphs" font-weight="bold" stroke="#3030d0" stroke-width="0.25">D-STR-STR4</text>
<line x1="512.2" y1="274.33043478260873" x2="541.8" y2="274.33043478260873" stroke="#2020a0" stroke-width="1.3"/>
<line x1="466.1" y1="278.5" x2="605.3" y2="278.5" stroke="#d0d0d0" stroke-width="1"/>
<text x="472.3" y="284.7826086956522" font-size="4.8" fill="#b030b0" textLength="23.5" lengthAdjust="spacingAndGlyphs" font-weight="bold" stroke="#b030b0" stroke-width="0.25">D-STR-STR5</text>
<line x1="512.2" y1="282.8826086956522" x2="541.8" y2="282.8826086956522" stroke="#a020a0" stroke-width="1.3"/>
<line x1="466.1" y1="287.5" x2="605.3" y2="287.5" stroke="#d0d0d0" stroke-width="1"/>
<text x="472.3" y="293.33478260869566" font-size="4.8" fill="#e8e8e8" textLength="23.5" lengthAdjust="spacingAndGlyphs" font-weight="bold" stroke="#e8e8e8" stroke-width="0.25">D-STR-STR6</text>
<line x1="512.2" y1="291.4347826086957" x2="541.8" y2="291.4347826086957" stroke="#c8c8c8" stroke-width="1.3"/>
<line x1="466.1" y1="295.5" x2="605.3" y2="295.5" stroke="#d0d0d0" stroke-width="1"/>
<text x="472.3" y="301.88695652173914" font-size="4.8" fill="#e8e8e8" textLength="21.150000000000002" lengthAdjust="spacingAndGlyphs" font-weight="bold" stroke="#e8e8e8" stroke-width="0.25">D-STR-DIM</text>
<line x1="512.2" y1="299.98695652173916" x2="541.8" y2="299.98695652173916" stroke="#c8c8c8" stroke-width="1.3"/>
<line x1="466.1" y1="304.5" x2="605.3" y2="304.5" stroke="#d0d0d0" stroke-width="1"/>
<text x="472.3" y="310.4391304347826" font-size="4.8" fill="#e8e8e8" textLength="21.150000000000002" lengthAdjust="spacingAndGlyphs" font-weight="bold" stroke="#e8e8e8" stroke-width="0.25">D-STR-TXT</text>
<line x1="512.2" y1="308.53913043478263" x2="541.8" y2="308.53913043478263" stroke="#c8c8c8" stroke-width="1.3"/>
<line x1="466.1" y1="312.5" x2="605.3" y2="312.5" stroke="#d0d0d0" stroke-width="1"/>
<text x="472.3" y="318.9913043478261" font-size="4.8" fill="#e8e8e8" textLength="23.5" lengthAdjust="spacingAndGlyphs" font-weight="bold" stroke="#e8e8e8" stroke-width="0.25">D-STR-HTXT</text>
<line x1="512.2" y1="317.0913043478261" x2="541.8" y2="317.0913043478261" stroke="#c8c8c8" stroke-width="1.3"/>
<line x1="443" y1="321.5" x2="605.3" y2="321.5" stroke="#d0d0d0" stroke-width="1"/>
<text x="472.3" y="327.54347826086956" font-size="4.8" fill="#e8e8e8" textLength="11.75" lengthAdjust="spacingAndGlyphs" font-weight="bold" stroke="#e8e8e8" stroke-width="0.25">D-WTR</text>
<line x1="512.2" y1="325.6434782608696" x2="541.8" y2="325.6434782608696" stroke="#c8c8c8" stroke-width="1.3"/>
<line x1="466.1" y1="329.5" x2="605.3" y2="329.5" stroke="#d0d0d0" stroke-width="1"/>
<text x="472.3" y="336.09565217391304" font-size="4.8" fill="#e8e8e8" textLength="21.150000000000002" lengthAdjust="spacingAndGlyphs" font-weight="bold" stroke="#e8e8e8" stroke-width="0.25">D-WTR-FBW</text>
<line x1="512.2" y1="334.19565217391306" x2="541.8" y2="334.19565217391306" stroke="#c8c8c8" stroke-width="1.3"/>
<line x1="466.1" y1="338.5" x2="605.3" y2="338.5" stroke="#d0d0d0" stroke-width="1"/>
<text x="472.3" y="344.6478260869565" font-size="4.8" fill="#e8e8e8" textLength="21.150000000000002" lengthAdjust="spacingAndGlyphs" font-weight="bold" stroke="#e8e8e8" stroke-width="0.25">D-WTR-TXT</text>
<line x1="512.2" y1="342.74782608695654" x2="541.8" y2="342.74782608695654" stroke="#c8c8c8" stroke-width="1.3"/>
<rect x="546.6" y="187" width="14" height="1.1" fill="#fff"/>
<rect x="563.5" y="187" width="12" height="1.1" fill="#fff"/>
<rect x="580" y="187" width="24" height="1.1" fill="#fff"/>
<rect x="546.6" y="189.2" width="18" height="1.9" fill="#fff"/>
<rect x="564.6" y="188.8" width="20" height="1.5" fill="#ddd"/>
<rect x="584.6" y="189.2" width="19.4" height="1.9" fill="#fff"/>
<text x="532" y="123.5" font-size="6" fill="#e8e8e8" textLength="60" lengthAdjust="spacingAndGlyphs" font-weight="bold">階段伝導図（その7）</text>
<line x1="531" y1="124.5" x2="603" y2="124.5" stroke="#e0e0e0" stroke-width="0.9"/>
<rect x="592" y="121.3" width="11" height="3" fill="#fff"/>
<line x1="622.5" y1="243.2" x2="622.5" y2="326.4" stroke="#d0d0d0" stroke-width="1"/>
<line x1="645.5" y1="243.2" x2="645.5" y2="326.4" stroke="#d0d0d0" stroke-width="1"/>
<line x1="672.5" y1="243.2" x2="672.5" y2="326.4" stroke="#d0d0d0" stroke-width="1"/>
<line x1="697.5" y1="243.2" x2="697.5" y2="326.4" stroke="#d0d0d0" stroke-width="1"/>
<line x1="622.6" y1="243.5" x2="697.6" y2="243.5" stroke="#d0d0d0" stroke-width="1"/>
<line x1="622.6" y1="257.5" x2="697.6" y2="257.5" stroke="#d0d0d0" stroke-width="1"/>
<line x1="622.6" y1="270.5" x2="697.6" y2="270.5" stroke="#d0d0d0" stroke-width="1"/>
<line x1="622.6" y1="284.5" x2="697.6" y2="284.5" stroke="#d0d0d0" stroke-width="1"/>
<line x1="622.6" y1="298.5" x2="697.6" y2="298.5" stroke="#d0d0d0" stroke-width="1"/>
<line x1="622.6" y1="312.5" x2="697.6" y2="312.5" stroke="#d0d0d0" stroke-width="1"/>
<line x1="622.6" y1="326.5" x2="697.6" y2="326.5" stroke="#d0d0d0" stroke-width="1"/>
<text x="626.5" y="252.2" font-size="4.8" fill="#e8e8e8" textLength="13" lengthAdjust="spacingAndGlyphs" stroke="#e8e8e8" stroke-width="0.2">S=1/100</text>
<text x="626.5" y="266.4" font-size="4.8" fill="#e8e8e8" textLength="13" lengthAdjust="spacingAndGlyphs" stroke="#e8e8e8" stroke-width="0.2">S=1/50</text>
<text x="626.5" y="279.9" font-size="4.8" fill="#e8e8e8" textLength="13" lengthAdjust="spacingAndGlyphs" stroke="#e8e8e8" stroke-width="0.2">S=1/30</text>
<text x="626.5" y="293.9" font-size="4.8" fill="#e8e8e8" textLength="13" lengthAdjust="spacingAndGlyphs" stroke="#e8e8e8" stroke-width="0.2">S=1/25</text>
<text x="626.5" y="307.9" font-size="4.8" fill="#e8e8e8" textLength="13" lengthAdjust="spacingAndGlyphs" stroke="#e8e8e8" stroke-width="0.2">S=1/10</text>
<text x="626.5" y="321.6" font-size="4.8" fill="#e8e8e8" textLength="13" lengthAdjust="spacingAndGlyphs" stroke="#e8e8e8" stroke-width="0.2">S=1/5</text>
<text x="684" y="252" font-size="5" fill="#e0e0e0" textLength="8" lengthAdjust="spacingAndGlyphs" font-weight="bold">記号</text>
<path d="M653.5 267.65 L653.5 261.5 L664.5 261.5 L664.5 267.65" fill="none" stroke="#e8e8e8" stroke-width="1"/>
<path d="M653.5 281.4 L653.5 275.5 L664.5 275.5 L664.5 281.4" fill="none" stroke="#e8e8e8" stroke-width="1"/>
<path d="M653.5 295.4 L653.5 289.5 L664.5 289.5 L664.5 295.4" fill="none" stroke="#e8e8e8" stroke-width="1"/>
<path d="M653.5 309.25 L653.5 303.5 L664.5 303.5 L664.5 309.25" fill="none" stroke="#e8e8e8" stroke-width="1"/>
<path d="M653.5 323.0 L653.5 317.5 L664.5 317.5 L664.5 323.0" fill="none" stroke="#e8e8e8" stroke-width="1"/>
<rect x="654" y="261" width="10" height="1.5" fill="#e0e0e0"/>
<rect x="656" y="274" width="7" height="2" fill="#e0e0e0"/>
<rect x="657" y="289" width="4" height="1.5" fill="#e0e0e0"/>
<rect x="681" y="264.5" width="9" height="2.5" fill="#fff"/>
<rect x="683" y="278" width="5" height="1.5" fill="#fff"/>
<rect x="685" y="292" width="2" height="2" fill="#fff"/>
<rect x="685" y="305" width="1" height="3" fill="#aaa"/>
<rect x="697.2" y="352.7" width="58.8" height="37.1" fill="none" stroke="#c8c890" stroke-width="1"/>
<line x1="697.2" y1="358.5" x2="756" y2="358.5" stroke="#c0c0a0" stroke-width="0.7"/>
<line x1="697.2" y1="363.5" x2="756" y2="363.5" stroke="#c0c0a0" stroke-width="0.7"/>
<line x1="697.2" y1="368.5" x2="756" y2="368.5" stroke="#c0c0a0" stroke-width="0.7"/>
<line x1="697.2" y1="373.5" x2="756" y2="373.5" stroke="#c0c0a0" stroke-width="0.7"/>
<line x1="697.2" y1="378.5" x2="756" y2="378.5" stroke="#c0c0a0" stroke-width="0.7"/>
<line x1="697.2" y1="383.5" x2="756" y2="383.5" stroke="#c0c0a0" stroke-width="0.7"/>
<line x1="710.5" y1="358.3" x2="710.5" y2="383.5" stroke="#c0c0a0" stroke-width="0.7"/>
<line x1="725.5" y1="352.7" x2="725.5" y2="358.3" stroke="#c0c0a0" stroke-width="0.7"/>
<line x1="740.5" y1="352.7" x2="740.5" y2="358.3" stroke="#c0c0a0" stroke-width="0.7"/>
<rect x="703" y="354.5" width="16" height="1.6" fill="#fff"/>
<rect x="728" y="354.5" width="8" height="1.6" fill="#fff"/>
<rect x="748" y="354" width="3" height="3" fill="#fff"/>
<rect x="699" y="360" width="9" height="2" fill="#fff"/>
<rect x="699" y="365" width="9" height="2" fill="#fff"/>
<rect x="699" y="370" width="9" height="2" fill="#fff"/>
<rect x="699" y="375" width="9" height="2" fill="#fff"/>
<rect x="699" y="380" width="9" height="2" fill="#fff"/>
<rect x="715" y="359.5" width="37" height="1.8" fill="#fff"/>
<rect x="715" y="362" width="25" height="1.2" fill="#fff"/>
<rect x="718" y="365" width="26" height="2" fill="#fff"/>
<rect x="724" y="370" width="18" height="2" fill="#fff"/>
<rect x="716" y="375" width="6" height="2" fill="#fff"/>
<rect x="731" y="375" width="9" height="2" fill="#fff"/>
<line x1="729.5" y1="373.4" x2="729.5" y2="378.5" stroke="#c0c0a0" stroke-width="0.7"/>
<line x1="742.5" y1="373.4" x2="742.5" y2="378.5" stroke="#c0c0a0" stroke-width="0.7"/>
<rect x="713" y="380" width="42" height="2" fill="#fff"/>
<rect x="699" y="384.5" width="55" height="3" fill="#e8e8c8"/>
<line x1="231.5" y1="425" x2="231.5" y2="461.8" stroke="#d8d8d8" stroke-width="1"/>
<line x1="235.5" y1="465.5" x2="270.8" y2="465.5" stroke="#d8d8d8" stroke-width="1"/>
<path d="M227.9 425 L231.4 417 L235 425 Z" fill="none" stroke="#d8d8d8" stroke-width="1"/>
<path d="M270.8 461.5 L279.5 465.3 L270.8 469 Z" fill="none" stroke="#d8d8d8" stroke-width="1"/>
<rect x="227.5" y="461.8" width="8" height="7" fill="none" stroke="#d8d8d8" stroke-width="1"/>
<path d="M228.8 398.8 L232.7 404 L236.6 398.8 M232.7 404 L232.7 409.3" fill="none" stroke="#d8d8d8" stroke-width="1"/>
<path d="M288.3 460 L296.2 470.5 M296.2 460 L288.3 470.5" fill="none" stroke="#d8d8d8" stroke-width="1"/>
<line x1="439.5" y1="68" x2="439.5" y2="479" stroke="#c0c0c0" stroke-width="1"/>
<line x1="219" y1="259.5" x2="797" y2="259.5" stroke="#c0c0c0" stroke-width="1"/>
<rect x="434.5" y="254.5" width="10" height="10" fill="none" stroke="#c0c0c0" stroke-width="1"/>
</g>
</svg>
</body></html>
